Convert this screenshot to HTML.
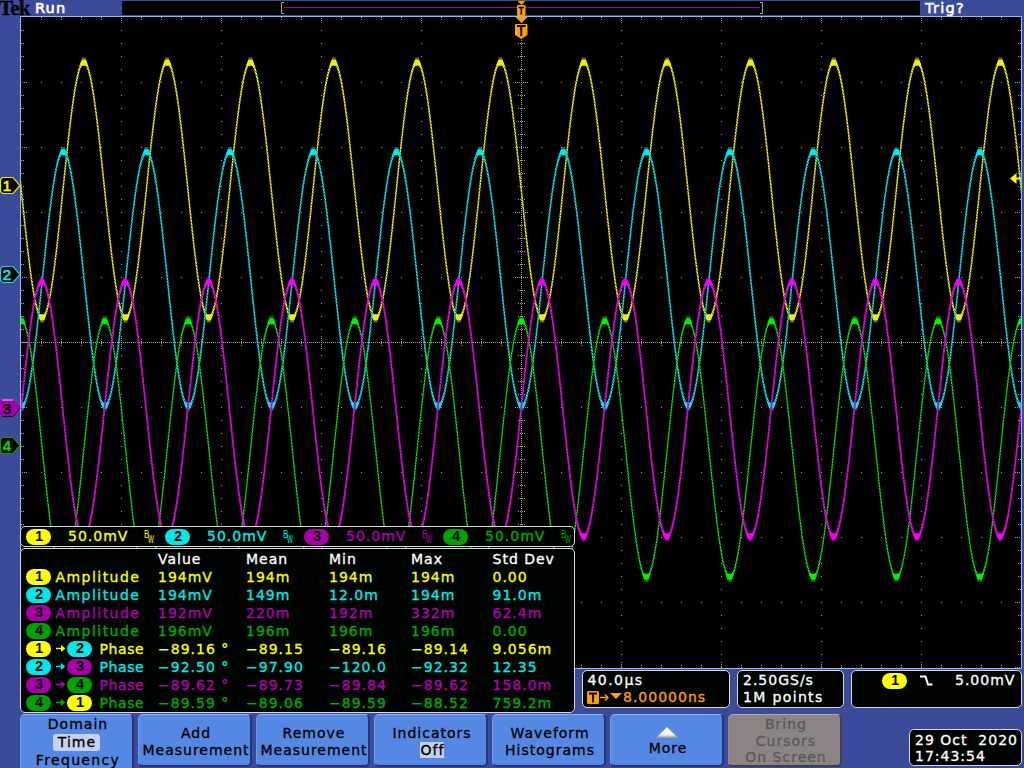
<!DOCTYPE html>
<html><head><meta charset="utf-8"><title>Tek scope</title>
<style>
html,body{margin:0;padding:0}
body{width:1024px;height:768px;overflow:hidden;position:relative;background:#3c4a9a;
 font-family:"DejaVu Sans","Liberation Sans",sans-serif;font-size:14px;letter-spacing:1px;line-height:16px;color:#fff;-webkit-text-stroke:0.3px}
.a{position:absolute;white-space:pre}
svg{position:absolute;left:0;top:0}
.pn{position:absolute;background:#000400;border:1px solid #d8d8d8;border-radius:5px;box-sizing:border-box}
.pl{position:absolute;width:25px;height:16px;border-radius:8px;color:#000;text-align:center;font-family:"Liberation Sans","DejaVu Sans",sans-serif;font-weight:bold;font-size:14.500px;line-height:15px;letter-spacing:0;-webkit-text-stroke:0;text-indent:1px}
.bt{position:absolute;top:714px;width:114px;height:53px;box-sizing:border-box;background:#5588e2;border-radius:5px;
 border-top:1px solid #86b4f6;border-left:1px solid #6c9cec;border-right:2px solid #263478;border-bottom:2px solid #263478;
 color:#000;text-align:center}
.bt span{position:absolute;left:2px;right:-1px;white-space:pre}
.y{color:#ffff00}.c{color:#00ecec}.m{color:#b400b4}.g{color:#00ac00}
.py{background:#ffff00}.pc{background:#00e8e8}.pm{background:#a800a8}.pg{background:#00a000}
.bw{position:absolute;font-size:10px;letter-spacing:0;line-height:8px;-webkit-text-stroke:0;font-family:"Liberation Sans","DejaVu Sans",sans-serif}
</style></head><body>

<svg width="1024" height="768" viewBox="0 0 1024 768" shape-rendering="auto">
<defs><clipPath id="gc"><rect x="21" y="17" width="1000" height="651"/></clipPath></defs>
<rect x="122" y="1" width="798" height="14" fill="#000400"/>
<rect x="284" y="7" width="476" height="1" fill="#a800a8"/>
<path d="M284 2.5H281.5V13.5H284" fill="none" stroke="#a8a8a8" stroke-width="1"/>
<path d="M760 2.5H762.5V13.5H760" fill="none" stroke="#a8a8a8" stroke-width="1"/>
<rect x="20.5" y="16.5" width="1001" height="652" fill="#000" stroke="#8cb8f4" stroke-width="1"/>
<g stroke="#aca07c" stroke-width="1" fill="none" clip-path="url(#gc)"><path d="M121.5 30V668" stroke-dasharray="1 12"/><path d="M121.5 336V349" stroke-dasharray="1 1"/><path d="M221.5 30V668" stroke-dasharray="1 12"/><path d="M221.5 336V349" stroke-dasharray="1 1"/><path d="M321.5 30V668" stroke-dasharray="1 12"/><path d="M321.5 336V349" stroke-dasharray="1 1"/><path d="M421.5 30V668" stroke-dasharray="1 12"/><path d="M421.5 336V349" stroke-dasharray="1 1"/><path d="M521.5 18V668" stroke-dasharray="1 1"/><path d="M621.5 30V668" stroke-dasharray="1 12"/><path d="M621.5 336V349" stroke-dasharray="1 1"/><path d="M721.5 30V668" stroke-dasharray="1 12"/><path d="M721.5 336V349" stroke-dasharray="1 1"/><path d="M821.5 30V668" stroke-dasharray="1 12"/><path d="M821.5 336V349" stroke-dasharray="1 1"/><path d="M921.5 30V668" stroke-dasharray="1 12"/><path d="M921.5 336V349" stroke-dasharray="1 1"/><path d="M41 82.5H1021" stroke-dasharray="1 19"/><path d="M515 82.5H528" stroke-dasharray="1 1"/><path d="M41 147.5H1021" stroke-dasharray="1 19"/><path d="M515 147.5H528" stroke-dasharray="1 1"/><path d="M41 212.5H1021" stroke-dasharray="1 19"/><path d="M515 212.5H528" stroke-dasharray="1 1"/><path d="M41 277.5H1021" stroke-dasharray="1 19"/><path d="M515 277.5H528" stroke-dasharray="1 1"/><path d="M21 342.5H1021" stroke-dasharray="1 1"/><path d="M41 407.5H1021" stroke-dasharray="1 19"/><path d="M515 407.5H528" stroke-dasharray="1 1"/><path d="M41 472.5H1021" stroke-dasharray="1 19"/><path d="M515 472.5H528" stroke-dasharray="1 1"/><path d="M41 537.5H1021" stroke-dasharray="1 19"/><path d="M515 537.5H528" stroke-dasharray="1 1"/><path d="M41 602.5H1021" stroke-dasharray="1 19"/><path d="M515 602.5H528" stroke-dasharray="1 1"/><path d="M41 339.5H1021M41 341.5H1021M41 343.5H1021M41 345.5H1021" stroke-dasharray="1 19 1 19 1 19 1 39"/><path d="M518.5 30V668M520.5 30V668M522.5 30V668M524.5 30V668" stroke-dasharray="1 12 1 12 1 12 1 25"/><path d="M41 17.5H1021M41 19.5H1021M41 667.5H1021M41 665.5H1021" stroke-dasharray="1 19 1 19 1 19 1 39"/><path d="M121 18.5H1021M121 20.5H1021M121 22.5H1021M121 666.5H1021M121 664.5H1021M121 662.5H1021" stroke-dasharray="1 99"/><path d="M21.5 30V668M23.5 30V668M1020.5 30V668M1018.5 30V668" stroke-dasharray="1 12 1 12 1 12 1 25"/><path d="M22.5 82V668M24.5 82V668M26.5 82V668M1019.5 82V668M1017.5 82V668M1015.5 82V668" stroke-dasharray="1 64"/></g>
<g clip-path="url(#gc)">
<defs><pattern id="pw1" patternUnits="userSpaceOnUse" width="16.00" height="6.00"><rect width="16.00" height="6.00" fill="#888800"/><rect x="0.00" y="-3.00" width="3.20" height="2" fill="#f0f000"/><rect x="0.00" y="0.00" width="3.20" height="2" fill="#f0f000"/><rect x="0.00" y="3.00" width="3.20" height="2" fill="#f0f000"/><rect x="3.20" y="-2.00" width="3.20" height="2" fill="#f0f000"/><rect x="3.20" y="1.00" width="3.20" height="2" fill="#f0f000"/><rect x="3.20" y="4.00" width="3.20" height="2" fill="#f0f000"/><rect x="6.40" y="-1.00" width="3.20" height="2" fill="#f0f000"/><rect x="6.40" y="2.00" width="3.20" height="2" fill="#f0f000"/><rect x="6.40" y="5.00" width="3.20" height="2" fill="#f0f000"/><rect x="9.60" y="-3.00" width="3.20" height="2" fill="#f0f000"/><rect x="9.60" y="0.00" width="3.20" height="2" fill="#f0f000"/><rect x="9.60" y="3.00" width="3.20" height="2" fill="#f0f000"/><rect x="12.80" y="-1.00" width="3.20" height="2" fill="#f0f000"/><rect x="12.80" y="2.00" width="3.20" height="2" fill="#f0f000"/><rect x="12.80" y="5.00" width="3.20" height="2" fill="#f0f000"/></pattern></defs><g fill="none" stroke-width="4.80" stroke-linejoin="round" stroke-linecap="round" transform="scale(0.3125 1)"><path d="M57.6 158.5L60.8 167.9L64.0 177.5L67.2 187.1L70.4 196.8L73.6 206.4L76.8 215.9L80.0 225.2L83.2 234.4L86.4 243.3L89.6 251.9L92.8 260.2L96.0 268.1L99.2 275.5L102.4 282.4L105.6 288.8L108.8 294.7L112.0 299.9L115.2 304.6L118.4 308.5L121.6 311.8L124.8 314.4L128.0 316.3L131.2 317.5L134.4 318.0L137.6 317.7L140.8 316.7L144.0 315.0L147.2 312.6L150.4 309.5L153.6 305.7L156.8 301.2L160.0 296.1L163.2 290.4L166.4 284.2L169.6 277.4L172.8 270.1L176.0 262.3L179.2 254.2L182.4 245.7L185.6 236.8L188.8 227.7L192.0 218.4L195.2 208.9L198.4 199.3L201.6 189.7L204.8 180.0L208.0 170.5L211.2 161.0L214.4 151.7L217.6 142.6L220.8 133.8L224.0 125.3L227.2 117.1L230.4 109.4L233.6 102.1L236.8 95.4L240.0 89.2L243.2 83.5L246.4 78.5L249.6 74.0L252.8 70.3L256.0 67.2L259.2 64.8L262.4 63.2L265.6 62.2L268.8 62.0L272.0 62.5L275.2 63.8L278.4 65.7L281.6 68.4L284.8 71.7L288.0 75.7L291.2 80.4L294.4 85.7L297.6 91.6L300.8 98.0L304.0 105.0L307.2 112.4L310.4 120.3L313.6 128.6L316.8 137.3L320.0 146.2L323.2 155.4L326.4 164.8L329.6 174.3L332.8 183.9L336.0 193.5L339.2 203.2L342.4 212.7L345.6 222.1L348.8 231.4L352.0 240.4L355.2 249.1L358.4 257.5L361.6 265.5L364.8 273.1L368.0 280.2L371.2 286.8L374.4 292.8L377.6 298.2L380.8 303.1L384.0 307.3L387.2 310.8L390.4 313.7L393.6 315.8L396.8 317.2L400.0 317.9L403.2 317.9L406.4 317.1L409.6 315.7L412.8 313.5L416.0 310.6L419.2 307.0L422.4 302.8L425.6 297.9L428.8 292.4L432.0 286.3L435.2 279.7L438.4 272.6L441.6 265.0L444.8 256.9L448.0 248.5L451.2 239.8L454.4 230.8L457.6 221.5L460.8 212.1L464.0 202.5L467.2 192.9L470.4 183.2L473.6 173.6L476.8 164.1L480.0 154.8L483.2 145.6L486.4 136.7L489.6 128.1L492.8 119.8L496.0 111.9L499.2 104.5L502.4 97.6L505.6 91.2L508.8 85.3L512.0 80.1L515.2 75.4L518.4 71.5L521.6 68.2L524.8 65.6L528.0 63.7L531.2 62.5L534.4 62.0L537.6 62.3L540.8 63.3L544.0 65.0L547.2 67.4L550.4 70.5L553.6 74.3L556.8 78.8L560.0 83.9L563.2 89.6L566.4 95.8L569.6 102.6L572.8 109.9L576.0 117.7L579.2 125.8L582.4 134.3L585.6 143.2L588.8 152.3L592.0 161.6L595.2 171.1L598.4 180.7L601.6 190.3L604.8 200.0L608.0 209.6L611.2 219.0L614.4 228.3L617.6 237.4L620.8 246.2L624.0 254.7L627.2 262.9L630.4 270.6L633.6 277.9L636.8 284.6L640.0 290.8L643.2 296.5L646.4 301.5L649.6 306.0L652.8 309.7L656.0 312.8L659.2 315.2L662.4 316.8L665.6 317.8L668.8 318.0L672.0 317.5L675.2 316.2L678.4 314.3L681.6 311.6L684.8 308.3L688.0 304.3L691.2 299.6L694.4 294.3L697.6 288.4L700.8 282.0L704.0 275.0L707.2 267.6L710.4 259.7L713.6 251.4L716.8 242.7L720.0 233.8L723.2 224.6L726.4 215.2L729.6 205.7L732.8 196.1L736.0 186.5L739.2 176.8L742.4 167.3L745.6 157.9L748.8 148.6L752.0 139.6L755.2 130.9L758.4 122.5L761.6 114.5L764.8 106.9L768.0 99.8L771.2 93.2L774.4 87.2L777.6 81.8L780.8 76.9L784.0 72.7L787.2 69.2L790.4 66.3L793.6 64.2L796.8 62.8L800.0 62.1L803.2 62.1L806.4 62.9L809.6 64.3L812.8 66.5L816.0 69.4L819.2 73.0L822.4 77.2L825.6 82.1L828.8 87.6L832.0 93.7L835.2 100.3L838.4 107.4L841.6 115.0L844.8 123.1L848.0 131.5L851.2 140.2L854.4 149.2L857.6 158.5L860.8 167.9L864.0 177.5L867.2 187.1L870.4 196.8L873.6 206.4L876.8 215.9L880.0 225.3L883.2 234.4L886.4 243.3L889.6 252.0L892.8 260.2L896.0 268.1L899.2 275.5L902.4 282.4L905.6 288.8L908.8 294.7L912.0 299.9L915.2 304.6L918.4 308.5L921.6 311.8L924.8 314.4L928.0 316.3L931.2 317.5L934.4 318.0L937.6 317.7L940.8 316.7L944.0 315.0L947.2 312.6L950.4 309.5L953.6 305.7L956.8 301.2L960.0 296.1L963.2 290.4L966.4 284.2L969.6 277.4L972.8 270.1L976.0 262.3L979.2 254.2L982.4 245.7L985.6 236.8L988.8 227.7L992.0 218.4L995.2 208.9L998.4 199.3L1001.6 189.7L1004.8 180.0L1008.0 170.4L1011.2 161.0L1014.4 151.7L1017.6 142.6L1020.8 133.8L1024.0 125.3L1027.2 117.1L1030.4 109.4L1033.6 102.1L1036.8 95.4L1040.0 89.2L1043.2 83.5L1046.4 78.5L1049.6 74.0L1052.8 70.3L1056.0 67.2L1059.2 64.8L1062.4 63.2L1065.6 62.2L1068.8 62.0L1072.0 62.5L1075.2 63.8L1078.4 65.7L1081.6 68.4L1084.8 71.7L1088.0 75.7L1091.2 80.4L1094.4 85.7L1097.6 91.6L1100.8 98.0L1104.0 105.0L1107.2 112.4L1110.4 120.3L1113.6 128.6L1116.8 137.3L1120.0 146.2L1123.2 155.4L1126.4 164.8L1129.6 174.3L1132.8 183.9L1136.0 193.5L1139.2 203.2L1142.4 212.7L1145.6 222.2L1148.8 231.4L1152.0 240.4L1155.2 249.1L1158.4 257.5L1161.6 265.5L1164.8 273.1L1168.0 280.2L1171.2 286.8L1174.4 292.8L1177.6 298.3L1180.8 303.1L1184.0 307.3L1187.2 310.8L1190.4 313.7L1193.6 315.8L1196.8 317.2L1200.0 317.9L1203.2 317.9L1206.4 317.1L1209.6 315.7L1212.8 313.5L1216.0 310.6L1219.2 307.0L1222.4 302.8L1225.6 297.9L1228.8 292.4L1232.0 286.3L1235.2 279.7L1238.4 272.6L1241.6 265.0L1244.8 256.9L1248.0 248.5L1251.2 239.8L1254.4 230.8L1257.6 221.5L1260.8 212.1L1264.0 202.5L1267.2 192.9L1270.4 183.2L1273.6 173.6L1276.8 164.1L1280.0 154.7L1283.2 145.6L1286.4 136.7L1289.6 128.0L1292.8 119.8L1296.0 111.9L1299.2 104.5L1302.4 97.6L1305.6 91.2L1308.8 85.3L1312.0 80.1L1315.2 75.4L1318.4 71.5L1321.6 68.2L1324.8 65.6L1328.0 63.7L1331.2 62.5L1334.4 62.0L1337.6 62.3L1340.8 63.3L1344.0 65.0L1347.2 67.4L1350.4 70.5L1353.6 74.3L1356.8 78.8L1360.0 83.9L1363.2 89.6L1366.4 95.8L1369.6 102.6L1372.8 109.9L1376.0 117.7L1379.2 125.8L1382.4 134.4L1385.6 143.2L1388.8 152.3L1392.0 161.6L1395.2 171.1L1398.4 180.7L1401.6 190.3L1404.8 200.0L1408.0 209.6L1411.2 219.0L1414.4 228.3L1417.6 237.4L1420.8 246.3L1424.0 254.8L1427.2 262.9L1430.4 270.6L1433.6 277.9L1436.8 284.6L1440.0 290.9L1443.2 296.5L1446.4 301.5L1449.6 306.0L1452.8 309.7L1456.0 312.8L1459.2 315.2L1462.4 316.8L1465.6 317.8L1468.8 318.0L1472.0 317.5L1475.2 316.2L1478.4 314.3L1481.6 311.6L1484.8 308.3L1488.0 304.3L1491.2 299.6L1494.4 294.3L1497.6 288.4L1500.8 282.0L1504.0 275.0L1507.2 267.5L1510.4 259.7L1513.6 251.4L1516.8 242.7L1520.0 233.8L1523.2 224.6L1526.4 215.2L1529.6 205.7L1532.8 196.1L1536.0 186.4L1539.2 176.8L1542.4 167.3L1545.6 157.8L1548.8 148.6L1552.0 139.6L1555.2 130.9L1558.4 122.5L1561.6 114.5L1564.8 106.9L1568.0 99.8L1571.2 93.2L1574.4 87.2L1577.6 81.7L1580.8 76.9L1584.0 72.7L1587.2 69.2L1590.4 66.3L1593.6 64.2L1596.8 62.8L1600.0 62.1L1603.2 62.1L1606.4 62.9L1609.6 64.3L1612.8 66.5L1616.0 69.4L1619.2 73.0L1622.4 77.2L1625.6 82.1L1628.8 87.6L1632.0 93.7L1635.2 100.3L1638.4 107.4L1641.6 115.0L1644.8 123.1L1648.0 131.5L1651.2 140.2L1654.4 149.2L1657.6 158.5L1660.8 167.9L1664.0 177.5L1667.2 187.1L1670.4 196.8L1673.6 206.4L1676.8 215.9L1680.0 225.3L1683.2 234.4L1686.4 243.3L1689.6 252.0L1692.8 260.2L1696.0 268.1L1699.2 275.5L1702.4 282.4L1705.6 288.8L1708.8 294.7L1712.0 299.9L1715.2 304.6L1718.4 308.5L1721.6 311.8L1724.8 314.4L1728.0 316.4L1731.2 317.5L1734.4 318.0L1737.6 317.7L1740.8 316.7L1744.0 315.0L1747.2 312.6L1750.4 309.5L1753.6 305.7L1756.8 301.2L1760.0 296.1L1763.2 290.4L1766.4 284.2L1769.6 277.4L1772.8 270.1L1776.0 262.3L1779.2 254.2L1782.4 245.6L1785.6 236.8L1788.8 227.7L1792.0 218.4L1795.2 208.9L1798.4 199.3L1801.6 189.7L1804.8 180.0L1808.0 170.4L1811.2 161.0L1814.4 151.7L1817.6 142.6L1820.8 133.7L1824.0 125.2L1827.2 117.1L1830.4 109.4L1833.6 102.1L1836.8 95.4L1840.0 89.1L1843.2 83.5L1846.4 78.4L1849.6 74.0L1852.8 70.3L1856.0 67.2L1859.2 64.8L1862.4 63.2L1865.6 62.2L1868.8 62.0L1872.0 62.5L1875.2 63.8L1878.4 65.7L1881.6 68.4L1884.8 71.7L1888.0 75.7L1891.2 80.4L1894.4 85.7L1897.6 91.6L1900.8 98.0L1904.0 105.0L1907.2 112.5L1910.4 120.3L1913.6 128.6L1916.8 137.3L1920.0 146.2L1923.2 155.4L1926.4 164.8L1929.6 174.3L1932.8 183.9L1936.0 193.6L1939.2 203.2L1942.4 212.7L1945.6 222.2L1948.8 231.4L1952.0 240.4L1955.2 249.1L1958.4 257.5L1961.6 265.5L1964.8 273.1L1968.0 280.2L1971.2 286.8L1974.4 292.8L1977.6 298.3L1980.8 303.1L1984.0 307.3L1987.2 310.8L1990.4 313.7L1993.6 315.8L1996.8 317.2L2000.0 317.9L2003.2 317.9L2006.4 317.1L2009.6 315.7L2012.8 313.5L2016.0 310.6L2019.2 307.0L2022.4 302.8L2025.6 297.9L2028.8 292.4L2032.0 286.3L2035.2 279.7L2038.4 272.6L2041.6 265.0L2044.8 256.9L2048.0 248.5L2051.2 239.8L2054.4 230.8L2057.6 221.5L2060.8 212.1L2064.0 202.5L2067.2 192.9L2070.4 183.2L2073.6 173.6L2076.8 164.1L2080.0 154.7L2083.2 145.6L2086.4 136.6L2089.6 128.0L2092.8 119.8L2096.0 111.9L2099.2 104.5L2102.4 97.6L2105.6 91.2L2108.8 85.3L2112.0 80.1L2115.2 75.4L2118.4 71.5L2121.6 68.2L2124.8 65.6L2128.0 63.6L2131.2 62.5L2134.4 62.0L2137.6 62.3L2140.8 63.3L2144.0 65.0L2147.2 67.4L2150.4 70.5L2153.6 74.3L2156.8 78.8L2160.0 83.9L2163.2 89.6L2166.4 95.8L2169.6 102.6L2172.8 109.9L2176.0 117.7L2179.2 125.8L2182.4 134.4L2185.6 143.2L2188.8 152.3L2192.0 161.6L2195.2 171.1L2198.4 180.7L2201.6 190.3L2204.8 200.0L2208.0 209.6L2211.2 219.0L2214.4 228.4L2217.6 237.4L2220.8 246.3L2224.0 254.8L2227.2 262.9L2230.4 270.6L2233.6 277.9L2236.8 284.6L2240.0 290.9L2243.2 296.5L2246.4 301.6L2249.6 306.0L2252.8 309.7L2256.0 312.8L2259.2 315.2L2262.4 316.8L2265.6 317.8L2268.8 318.0L2272.0 317.5L2275.2 316.2L2278.4 314.3L2281.6 311.6L2284.8 308.3L2288.0 304.3L2291.2 299.6L2294.4 294.3L2297.6 288.4L2300.8 282.0L2304.0 275.0L2307.2 267.5L2310.4 259.6L2313.6 251.4L2316.8 242.7L2320.0 233.8L2323.2 224.6L2326.4 215.2L2329.6 205.7L2332.8 196.1L2336.0 186.4L2339.2 176.8L2342.4 167.3L2345.6 157.8L2348.8 148.6L2352.0 139.6L2355.2 130.9L2358.4 122.5L2361.6 114.5L2364.8 106.9L2368.0 99.8L2371.2 93.2L2374.4 87.2L2377.6 81.7L2380.8 76.9L2384.0 72.7L2387.2 69.2L2390.4 66.3L2393.6 64.2L2396.8 62.8L2400.0 62.1L2403.2 62.1L2406.4 62.9L2409.6 64.3L2412.8 66.5L2416.0 69.4L2419.2 73.0L2422.4 77.2L2425.6 82.1L2428.8 87.6L2432.0 93.7L2435.2 100.3L2438.4 107.4L2441.6 115.0L2444.8 123.1L2448.0 131.5L2451.2 140.2L2454.4 149.2L2457.6 158.5L2460.8 167.9L2464.0 177.5L2467.2 187.1L2470.4 196.8L2473.6 206.4L2476.8 215.9L2480.0 225.3L2483.2 234.4L2486.4 243.4L2489.6 252.0L2492.8 260.2L2496.0 268.1L2499.2 275.5L2502.4 282.4L2505.6 288.8L2508.8 294.7L2512.0 299.9L2515.2 304.6L2518.4 308.5L2521.6 311.8L2524.8 314.5L2528.0 316.4L2531.2 317.5L2534.4 318.0L2537.6 317.7L2540.8 316.7L2544.0 315.0L2547.2 312.6L2550.4 309.5L2553.6 305.7L2556.8 301.2L2560.0 296.1L2563.2 290.4L2566.4 284.2L2569.6 277.4L2572.8 270.1L2576.0 262.3L2579.2 254.2L2582.4 245.6L2585.6 236.8L2588.8 227.7L2592.0 218.4L2595.2 208.9L2598.4 199.3L2601.6 189.7L2604.8 180.0L2608.0 170.4L2611.2 161.0L2614.4 151.6L2617.6 142.6L2620.8 133.7L2624.0 125.2L2627.2 117.1L2630.4 109.4L2633.6 102.1L2636.8 95.4L2640.0 89.1L2643.2 83.5L2646.4 78.4L2649.6 74.0L2652.8 70.3L2656.0 67.2L2659.2 64.8L2662.4 63.2L2665.6 62.2L2668.8 62.0L2672.0 62.5L2675.2 63.8L2678.4 65.7L2681.6 68.4L2684.8 71.7L2688.0 75.7L2691.2 80.4L2694.4 85.7L2697.6 91.6L2700.8 98.0L2704.0 105.0L2707.2 112.5L2710.4 120.4L2713.6 128.6L2716.8 137.3L2720.0 146.2L2723.2 155.4L2726.4 164.8L2729.6 174.3L2732.8 183.9L2736.0 193.6L2739.2 203.2L2742.4 212.7L2745.6 222.2L2748.8 231.4L2752.0 240.4L2755.2 249.1L2758.4 257.5L2761.6 265.5L2764.8 273.1L2768.0 280.2L2771.2 286.8L2774.4 292.8L2777.6 298.3L2780.8 303.1L2784.0 307.3L2787.2 310.8L2790.4 313.7L2793.6 315.8L2796.8 317.2L2800.0 317.9L2803.2 317.9L2806.4 317.1L2809.6 315.7L2812.8 313.5L2816.0 310.6L2819.2 307.0L2822.4 302.8L2825.6 297.9L2828.8 292.4L2832.0 286.3L2835.2 279.7L2838.4 272.6L2841.6 265.0L2844.8 256.9L2848.0 248.5L2851.2 239.8L2854.4 230.7L2857.6 221.5L2860.8 212.1L2864.0 202.5L2867.2 192.9L2870.4 183.2L2873.6 173.6L2876.8 164.1L2880.0 154.7L2883.2 145.6L2886.4 136.6L2889.6 128.0L2892.8 119.8L2896.0 111.9L2899.2 104.5L2902.4 97.6L2905.6 91.1L2908.8 85.3L2912.0 80.1L2915.2 75.4L2918.4 71.5L2921.6 68.2L2924.8 65.5L2928.0 63.6L2931.2 62.5L2934.4 62.0L2937.6 62.3L2940.8 63.3L2944.0 65.0L2947.2 67.4L2950.4 70.5L2953.6 74.3L2956.8 78.8L2960.0 83.9L2963.2 89.6L2966.4 95.8L2969.6 102.6L2972.8 109.9L2976.0 117.7L2979.2 125.8L2982.4 134.4L2985.6 143.2L2988.8 152.3L2992.0 161.6L2995.2 171.1L2998.4 180.7L3001.6 190.4L3004.8 200.0L3008.0 209.6L3011.2 219.1L3014.4 228.4L3017.6 237.4L3020.8 246.3L3024.0 254.8L3027.2 262.9L3030.4 270.6L3033.6 277.9L3036.8 284.6L3040.0 290.9L3043.2 296.5L3046.4 301.6L3049.6 306.0L3052.8 309.7L3056.0 312.8L3059.2 315.2L3062.4 316.8L3065.6 317.8L3068.8 318.0L3072.0 317.5L3075.2 316.2L3078.4 314.3L3081.6 311.6L3084.8 308.3L3088.0 304.3L3091.2 299.6L3094.4 294.3L3097.6 288.4L3100.8 282.0L3104.0 275.0L3107.2 267.5L3110.4 259.6L3113.6 251.4L3116.8 242.7L3120.0 233.8L3123.2 224.6L3126.4 215.2L3129.6 205.7L3132.8 196.1L3136.0 186.4L3139.2 176.8L3142.4 167.2L3145.6 157.8L3148.8 148.6L3152.0 139.6L3155.2 130.9L3158.4 122.5L3161.6 114.5L3164.8 106.9L3168.0 99.8L3171.2 93.2L3174.4 87.2L3177.6 81.7L3180.8 76.9L3184.0 72.7L3187.2 69.2L3190.4 66.3L3193.6 64.2L3196.8 62.8L3200.0 62.1L3203.2 62.1L3206.4 62.9L3209.6 64.3L3212.8 66.5L3216.0 69.4L3219.2 73.0L3222.4 77.2L3225.6 82.1L3228.8 87.6L3232.0 93.7L3235.2 100.3L3238.4 107.4L3241.6 115.1L3244.8 123.1L3248.0 131.5L3251.2 140.2L3254.4 149.3L3257.6 158.5L3260.8 167.9L3264.0 177.5L3267.2 187.1L3270.4 196.8L3273.6 206.4L3276.8 215.9" stroke="url(#pw1)"/></g><path d="M39.9 320.2h4.400l1.200-3.500l0.600-2.500h-8l0.600 2.500zM81.6 59.8h4.400l1.200 3.500l0.600 2.500h-8l0.600-2.500zM123.3 320.2h4.400l1.200-3.500l0.600-2.500h-8l0.600 2.500zM164.9 59.8h4.400l1.200 3.500l0.600 2.500h-8l0.600-2.500zM206.6 320.2h4.400l1.200-3.500l0.600-2.500h-8l0.600 2.500zM248.3 59.8h4.400l1.200 3.500l0.600 2.500h-8l0.600-2.500zM289.9 320.2h4.400l1.200-3.500l0.600-2.500h-8l0.600 2.500zM331.6 59.8h4.400l1.200 3.500l0.600 2.500h-8l0.600-2.500zM373.3 320.2h4.400l1.200-3.500l0.600-2.500h-8l0.600 2.500zM414.9 59.8h4.400l1.200 3.500l0.600 2.500h-8l0.600-2.500zM456.6 320.2h4.400l1.200-3.500l0.600-2.500h-8l0.600 2.500zM498.3 59.8h4.400l1.200 3.500l0.600 2.500h-8l0.600-2.500zM539.9 320.2h4.400l1.200-3.500l0.600-2.500h-8l0.600 2.500zM581.6 59.8h4.400l1.200 3.500l0.600 2.500h-8l0.600-2.500zM623.3 320.2h4.400l1.200-3.500l0.600-2.500h-8l0.600 2.500zM664.9 59.8h4.400l1.200 3.500l0.600 2.500h-8l0.600-2.500zM706.6 320.2h4.400l1.200-3.500l0.600-2.500h-8l0.600 2.500zM748.3 59.8h4.400l1.200 3.500l0.600 2.500h-8l0.600-2.500zM789.9 320.2h4.400l1.200-3.500l0.600-2.500h-8l0.600 2.500zM831.6 59.8h4.400l1.200 3.500l0.600 2.500h-8l0.600-2.500zM873.3 320.2h4.400l1.200-3.500l0.600-2.500h-8l0.600 2.500zM914.9 59.8h4.400l1.200 3.500l0.600 2.500h-8l0.600-2.500zM956.6 320.2h4.400l1.200-3.500l0.600-2.500h-8l0.600 2.500zM998.3 59.8h4.400l1.200 3.500l0.600 2.500h-8l0.600-2.500z" fill="#f0f000"/><path d="M42.1 320.0v2.500M83.8 60.0v-2.500M125.5 320.0v2.500M167.1 60.0v-2.500M208.8 320.0v2.500M250.5 60.0v-2.500M292.1 320.0v2.500M333.8 60.0v-2.500M375.5 320.0v2.500M417.1 60.0v-2.500M458.8 320.0v2.500M500.5 60.0v-2.500M542.1 320.0v2.500M583.8 60.0v-2.500M625.5 320.0v2.500M667.1 60.0v-2.500M708.8 320.0v2.500M750.5 60.0v-2.500M792.1 320.0v2.500M833.8 60.0v-2.500M875.5 320.0v2.500M917.1 60.0v-2.500M958.8 320.0v2.500M1000.5 60.0v-2.500" stroke="#f0f000" stroke-width="4" fill="none" opacity="0.45"/>
<defs><pattern id="pw2" patternUnits="userSpaceOnUse" width="16.00" height="6.00"><rect width="16.00" height="6.00" fill="#008088"/><rect x="0.00" y="-3.00" width="3.20" height="2" fill="#00e8f0"/><rect x="0.00" y="0.00" width="3.20" height="2" fill="#00e8f0"/><rect x="0.00" y="3.00" width="3.20" height="2" fill="#00e8f0"/><rect x="3.20" y="-2.00" width="3.20" height="2" fill="#00e8f0"/><rect x="3.20" y="1.00" width="3.20" height="2" fill="#00e8f0"/><rect x="3.20" y="4.00" width="3.20" height="2" fill="#00e8f0"/><rect x="6.40" y="-1.00" width="3.20" height="2" fill="#00e8f0"/><rect x="6.40" y="2.00" width="3.20" height="2" fill="#00e8f0"/><rect x="6.40" y="5.00" width="3.20" height="2" fill="#00e8f0"/><rect x="9.60" y="-3.00" width="3.20" height="2" fill="#00e8f0"/><rect x="9.60" y="0.00" width="3.20" height="2" fill="#00e8f0"/><rect x="9.60" y="3.00" width="3.20" height="2" fill="#00e8f0"/><rect x="12.80" y="-1.00" width="3.20" height="2" fill="#00e8f0"/><rect x="12.80" y="2.00" width="3.20" height="2" fill="#00e8f0"/><rect x="12.80" y="5.00" width="3.20" height="2" fill="#00e8f0"/></pattern></defs><g fill="none" stroke-width="4.96" stroke-linejoin="round" stroke-linecap="round" transform="scale(0.3125 1)"><path d="M57.6 401.7L60.8 403.9L64.0 405.3L67.2 406.1L70.4 406.1L73.6 405.4L76.8 404.0L80.0 401.9L83.2 399.0L86.4 395.5L89.6 391.4L92.8 386.5L96.0 381.1L99.2 375.1L102.4 368.5L105.6 361.5L108.8 353.9L112.0 346.0L115.2 337.6L118.4 329.0L121.6 320.0L124.8 310.8L128.0 301.4L131.2 291.9L134.4 282.3L137.6 272.7L140.8 263.2L144.0 253.7L147.2 244.3L150.4 235.2L153.6 226.3L156.8 217.7L160.0 209.5L163.2 201.6L166.4 194.2L169.6 187.3L172.8 180.8L176.0 175.0L179.2 169.7L182.4 165.1L185.6 161.1L188.8 157.7L192.0 155.1L195.2 153.1L198.4 151.9L201.6 151.4L204.8 151.6L208.0 152.6L211.2 154.2L214.4 156.6L217.6 159.7L220.8 163.4L224.0 167.8L227.2 172.8L230.4 178.4L233.6 184.6L236.8 191.4L240.0 198.6L243.2 206.3L246.4 214.4L249.6 222.8L252.8 231.6L256.0 240.7L259.2 249.9L262.4 259.3L265.6 268.9L268.8 278.5L272.0 288.1L275.2 297.6L278.4 307.1L281.6 316.3L284.8 325.4L288.0 334.2L291.2 342.7L294.4 350.8L297.6 358.5L300.8 365.8L304.0 372.5L307.2 378.8L310.4 384.4L313.6 389.5L316.8 393.9L320.0 397.7L323.2 400.8L326.4 403.2L329.6 404.9L332.8 405.9L336.0 406.2L339.2 405.7L342.4 404.6L345.6 402.7L348.8 400.1L352.0 396.8L355.2 392.8L358.4 388.2L361.6 383.0L364.8 377.2L368.0 370.8L371.2 363.9L374.4 356.5L377.6 348.7L380.8 340.5L384.0 331.9L387.2 323.0L390.4 313.9L393.6 304.6L396.8 295.1L400.0 285.5L403.2 275.9L406.4 266.3L409.6 256.8L412.8 247.4L416.0 238.2L419.2 229.2L422.4 220.5L425.6 212.2L428.8 204.2L432.0 196.6L435.2 189.5L438.4 182.9L441.6 176.9L444.8 171.4L448.0 166.5L451.2 162.3L454.4 158.8L457.6 155.9L460.8 153.7L464.0 152.3L467.2 151.5L470.4 151.5L473.6 152.2L476.8 153.6L480.0 155.7L483.2 158.6L486.4 162.1L489.6 166.2L492.8 171.1L496.0 176.5L499.2 182.5L502.4 189.1L505.6 196.1L508.8 203.7L512.0 211.6L515.2 220.0L518.4 228.6L521.6 237.6L524.8 246.8L528.0 256.2L531.2 265.7L534.4 275.3L537.6 284.9L540.8 294.5L544.0 303.9L547.2 313.3L550.4 322.4L553.6 331.3L556.8 339.9L560.0 348.1L563.2 356.0L566.4 363.4L569.6 370.3L572.8 376.8L576.0 382.6L579.2 387.9L582.4 392.5L585.6 396.5L588.8 399.9L592.0 402.5L595.2 404.5L598.4 405.7L601.6 406.2L604.8 406.0L608.0 405.0L611.2 403.4L614.4 401.0L617.6 397.9L620.8 394.2L624.0 389.8L627.2 384.8L630.4 379.2L633.6 373.0L636.8 366.2L640.0 359.0L643.2 351.3L646.4 343.2L649.6 334.8L652.8 326.0L656.0 316.9L659.2 307.7L662.4 298.2L665.6 288.7L668.8 279.1L672.0 269.5L675.2 260.0L678.4 250.5L681.6 241.3L684.8 232.2L688.0 223.4L691.2 214.9L694.4 206.8L697.6 199.1L700.8 191.8L704.0 185.1L707.2 178.8L710.4 173.2L713.6 168.1L716.8 163.7L720.0 159.9L723.2 156.8L726.4 154.4L729.6 152.7L732.8 151.7L736.0 151.4L739.2 151.9L742.4 153.0L745.6 154.9L748.8 157.5L752.0 160.8L755.2 164.8L758.4 169.4L761.6 174.6L764.8 180.4L768.0 186.8L771.2 193.7L774.4 201.1L777.6 208.9L780.8 217.2L784.0 225.7L787.2 234.6L790.4 243.7L793.6 253.1L796.8 262.5L800.0 272.1L803.2 281.7L806.4 291.3L809.6 300.8L812.8 310.2L816.0 319.4L819.2 328.4L822.4 337.1L825.6 345.4L828.8 353.4L832.0 361.0L835.2 368.1L838.4 374.7L841.6 380.7L844.8 386.2L848.0 391.1L851.2 395.3L854.4 398.8L857.6 401.7L860.8 403.9L864.0 405.4L867.2 406.1L870.4 406.1L873.6 405.4L876.8 404.0L880.0 401.9L883.2 399.0L886.4 395.5L889.6 391.4L892.8 386.5L896.0 381.1L899.2 375.1L902.4 368.5L905.6 361.5L908.8 353.9L912.0 346.0L915.2 337.6L918.4 328.9L921.6 320.0L924.8 310.8L928.0 301.4L931.2 291.9L934.4 282.3L937.6 272.7L940.8 263.1L944.0 253.7L947.2 244.3L950.4 235.2L953.6 226.3L956.8 217.7L960.0 209.5L963.2 201.6L966.4 194.2L969.6 187.2L972.8 180.8L976.0 175.0L979.2 169.7L982.4 165.1L985.6 161.1L988.8 157.7L992.0 155.1L995.2 153.1L998.4 151.9L1001.6 151.4L1004.8 151.6L1008.0 152.6L1011.2 154.2L1014.4 156.6L1017.6 159.7L1020.8 163.4L1024.0 167.8L1027.2 172.8L1030.4 178.4L1033.6 184.6L1036.8 191.4L1040.0 198.6L1043.2 206.3L1046.4 214.4L1049.6 222.8L1052.8 231.6L1056.0 240.7L1059.2 249.9L1062.4 259.4L1065.6 268.9L1068.8 278.5L1072.0 288.1L1075.2 297.6L1078.4 307.1L1081.6 316.3L1084.8 325.4L1088.0 334.2L1091.2 342.7L1094.4 350.8L1097.6 358.5L1100.8 365.8L1104.0 372.5L1107.2 378.8L1110.4 384.4L1113.6 389.5L1116.8 393.9L1120.0 397.7L1123.2 400.8L1126.4 403.2L1129.6 404.9L1132.8 405.9L1136.0 406.2L1139.2 405.7L1142.4 404.6L1145.6 402.7L1148.8 400.1L1152.0 396.8L1155.2 392.8L1158.4 388.2L1161.6 383.0L1164.8 377.2L1168.0 370.8L1171.2 363.9L1174.4 356.5L1177.6 348.7L1180.8 340.4L1184.0 331.9L1187.2 323.0L1190.4 313.9L1193.6 304.5L1196.8 295.1L1200.0 285.5L1203.2 275.9L1206.4 266.3L1209.6 256.8L1212.8 247.4L1216.0 238.2L1219.2 229.2L1222.4 220.5L1225.6 212.2L1228.8 204.2L1232.0 196.6L1235.2 189.5L1238.4 182.9L1241.6 176.9L1244.8 171.4L1248.0 166.5L1251.2 162.3L1254.4 158.8L1257.6 155.9L1260.8 153.7L1264.0 152.2L1267.2 151.5L1270.4 151.5L1273.6 152.2L1276.8 153.6L1280.0 155.7L1283.2 158.6L1286.4 162.1L1289.6 166.3L1292.8 171.1L1296.0 176.5L1299.2 182.5L1302.4 189.1L1305.6 196.1L1308.8 203.7L1312.0 211.6L1315.2 220.0L1318.4 228.7L1321.6 237.6L1324.8 246.8L1328.0 256.2L1331.2 265.7L1334.4 275.3L1337.6 284.9L1340.8 294.5L1344.0 303.9L1347.2 313.3L1350.4 322.4L1353.6 331.3L1356.8 339.9L1360.0 348.2L1363.2 356.0L1366.4 363.4L1369.6 370.4L1372.8 376.8L1376.0 382.6L1379.2 387.9L1382.4 392.5L1385.6 396.5L1388.8 399.9L1392.0 402.5L1395.2 404.5L1398.4 405.7L1401.6 406.2L1404.8 406.0L1408.0 405.0L1411.2 403.4L1414.4 401.0L1417.6 397.9L1420.8 394.2L1424.0 389.8L1427.2 384.8L1430.4 379.2L1433.6 373.0L1436.8 366.2L1440.0 359.0L1443.2 351.3L1446.4 343.2L1449.6 334.8L1452.8 326.0L1456.0 316.9L1459.2 307.7L1462.4 298.2L1465.6 288.7L1468.8 279.1L1472.0 269.5L1475.2 260.0L1478.4 250.5L1481.6 241.2L1484.8 232.2L1488.0 223.4L1491.2 214.9L1494.4 206.8L1497.6 199.1L1500.8 191.8L1504.0 185.0L1507.2 178.8L1510.4 173.2L1513.6 168.1L1516.8 163.7L1520.0 159.9L1523.2 156.8L1526.4 154.4L1529.6 152.7L1532.8 151.7L1536.0 151.4L1539.2 151.9L1542.4 153.0L1545.6 154.9L1548.8 157.5L1552.0 160.8L1555.2 164.8L1558.4 169.4L1561.6 174.6L1564.8 180.4L1568.0 186.8L1571.2 193.7L1574.4 201.1L1577.6 208.9L1580.8 217.2L1584.0 225.7L1587.2 234.6L1590.4 243.7L1593.6 253.1L1596.8 262.5L1600.0 272.1L1603.2 281.7L1606.4 291.3L1609.6 300.8L1612.8 310.2L1616.0 319.4L1619.2 328.4L1622.4 337.1L1625.6 345.4L1628.8 353.4L1632.0 361.0L1635.2 368.1L1638.4 374.7L1641.6 380.7L1644.8 386.2L1648.0 391.1L1651.2 395.3L1654.4 398.8L1657.6 401.7L1660.8 403.9L1664.0 405.4L1667.2 406.1L1670.4 406.1L1673.6 405.4L1676.8 404.0L1680.0 401.9L1683.2 399.0L1686.4 395.5L1689.6 391.3L1692.8 386.5L1696.0 381.1L1699.2 375.1L1702.4 368.5L1705.6 361.5L1708.8 353.9L1712.0 346.0L1715.2 337.6L1718.4 328.9L1721.6 320.0L1724.8 310.8L1728.0 301.4L1731.2 291.9L1734.4 282.3L1737.6 272.7L1740.8 263.1L1744.0 253.7L1747.2 244.3L1750.4 235.2L1753.6 226.3L1756.8 217.7L1760.0 209.4L1763.2 201.6L1766.4 194.2L1769.6 187.2L1772.8 180.8L1776.0 175.0L1779.2 169.7L1782.4 165.1L1785.6 161.1L1788.8 157.7L1792.0 155.1L1795.2 153.1L1798.4 151.9L1801.6 151.4L1804.8 151.6L1808.0 152.6L1811.2 154.2L1814.4 156.6L1817.6 159.7L1820.8 163.4L1824.0 167.8L1827.2 172.8L1830.4 178.4L1833.6 184.6L1836.8 191.4L1840.0 198.6L1843.2 206.3L1846.4 214.4L1849.6 222.8L1852.8 231.6L1856.0 240.7L1859.2 249.9L1862.4 259.4L1865.6 268.9L1868.8 278.5L1872.0 288.1L1875.2 297.6L1878.4 307.1L1881.6 316.4L1884.8 325.4L1888.0 334.2L1891.2 342.7L1894.4 350.8L1897.6 358.5L1900.8 365.8L1904.0 372.6L1907.2 378.8L1910.4 384.5L1913.6 389.5L1916.8 393.9L1920.0 397.7L1923.2 400.8L1926.4 403.2L1929.6 404.9L1932.8 405.9L1936.0 406.2L1939.2 405.7L1942.4 404.6L1945.6 402.7L1948.8 400.1L1952.0 396.8L1955.2 392.8L1958.4 388.2L1961.6 383.0L1964.8 377.2L1968.0 370.8L1971.2 363.9L1974.4 356.5L1977.6 348.7L1980.8 340.4L1984.0 331.9L1987.2 323.0L1990.4 313.9L1993.6 304.5L1996.8 295.1L2000.0 285.5L2003.2 275.9L2006.4 266.3L2009.6 256.8L2012.8 247.4L2016.0 238.2L2019.2 229.2L2022.4 220.5L2025.6 212.1L2028.8 204.2L2032.0 196.6L2035.2 189.5L2038.4 182.9L2041.6 176.9L2044.8 171.4L2048.0 166.5L2051.2 162.3L2054.4 158.8L2057.6 155.9L2060.8 153.7L2064.0 152.2L2067.2 151.5L2070.4 151.5L2073.6 152.2L2076.8 153.6L2080.0 155.7L2083.2 158.6L2086.4 162.1L2089.6 166.3L2092.8 171.1L2096.0 176.5L2099.2 182.5L2102.4 189.1L2105.6 196.1L2108.8 203.7L2112.0 211.6L2115.2 220.0L2118.4 228.7L2121.6 237.6L2124.8 246.8L2128.0 256.2L2131.2 265.7L2134.4 275.3L2137.6 284.9L2140.8 294.5L2144.0 304.0L2147.2 313.3L2150.4 322.4L2153.6 331.3L2156.8 339.9L2160.0 348.2L2163.2 356.0L2166.4 363.4L2169.6 370.4L2172.8 376.8L2176.0 382.6L2179.2 387.9L2182.4 392.5L2185.6 396.5L2188.8 399.9L2192.0 402.5L2195.2 404.5L2198.4 405.7L2201.6 406.2L2204.8 406.0L2208.0 405.0L2211.2 403.4L2214.4 401.0L2217.6 397.9L2220.8 394.2L2224.0 389.8L2227.2 384.8L2230.4 379.2L2233.6 373.0L2236.8 366.2L2240.0 359.0L2243.2 351.3L2246.4 343.2L2249.6 334.8L2252.8 326.0L2256.0 316.9L2259.2 307.7L2262.4 298.2L2265.6 288.7L2268.8 279.1L2272.0 269.5L2275.2 260.0L2278.4 250.5L2281.6 241.2L2284.8 232.2L2288.0 223.4L2291.2 214.9L2294.4 206.8L2297.6 199.1L2300.8 191.8L2304.0 185.0L2307.2 178.8L2310.4 173.1L2313.6 168.1L2316.8 163.7L2320.0 159.9L2323.2 156.8L2326.4 154.4L2329.6 152.7L2332.8 151.7L2336.0 151.4L2339.2 151.9L2342.4 153.0L2345.6 154.9L2348.8 157.5L2352.0 160.8L2355.2 164.8L2358.4 169.4L2361.6 174.6L2364.8 180.4L2368.0 186.8L2371.2 193.7L2374.4 201.1L2377.6 208.9L2380.8 217.2L2384.0 225.7L2387.2 234.6L2390.4 243.7L2393.6 253.1L2396.8 262.5L2400.0 272.1L2403.2 281.7L2406.4 291.3L2409.6 300.8L2412.8 310.2L2416.0 319.4L2419.2 328.4L2422.4 337.1L2425.6 345.5L2428.8 353.4L2432.0 361.0L2435.2 368.1L2438.4 374.7L2441.6 380.7L2444.8 386.2L2448.0 391.1L2451.2 395.3L2454.4 398.8L2457.6 401.7L2460.8 403.9L2464.0 405.4L2467.2 406.1L2470.4 406.1L2473.6 405.4L2476.8 404.0L2480.0 401.9L2483.2 399.0L2486.4 395.5L2489.6 391.3L2492.8 386.5L2496.0 381.1L2499.2 375.1L2502.4 368.5L2505.6 361.5L2508.8 353.9L2512.0 346.0L2515.2 337.6L2518.4 328.9L2521.6 320.0L2524.8 310.8L2528.0 301.4L2531.2 291.9L2534.4 282.3L2537.6 272.7L2540.8 263.1L2544.0 253.6L2547.2 244.3L2550.4 235.2L2553.6 226.3L2556.8 217.7L2560.0 209.4L2563.2 201.6L2566.4 194.2L2569.6 187.2L2572.8 180.8L2576.0 175.0L2579.2 169.7L2582.4 165.1L2585.6 161.1L2588.8 157.7L2592.0 155.1L2595.2 153.1L2598.4 151.9L2601.6 151.4L2604.8 151.6L2608.0 152.6L2611.2 154.2L2614.4 156.6L2617.6 159.7L2620.8 163.4L2624.0 167.8L2627.2 172.8L2630.4 178.4L2633.6 184.6L2636.8 191.4L2640.0 198.6L2643.2 206.3L2646.4 214.4L2649.6 222.9L2652.8 231.6L2656.0 240.7L2659.2 249.9L2662.4 259.4L2665.6 268.9L2668.8 278.5L2672.0 288.1L2675.2 297.7L2678.4 307.1L2681.6 316.4L2684.8 325.4L2688.0 334.2L2691.2 342.7L2694.4 350.8L2697.6 358.5L2700.8 365.8L2704.0 372.6L2707.2 378.8L2710.4 384.5L2713.6 389.5L2716.8 394.0L2720.0 397.7L2723.2 400.8L2726.4 403.2L2729.6 404.9L2732.8 405.9L2736.0 406.2L2739.2 405.7L2742.4 404.6L2745.6 402.7L2748.8 400.1L2752.0 396.8L2755.2 392.8L2758.4 388.2L2761.6 383.0L2764.8 377.1L2768.0 370.8L2771.2 363.9L2774.4 356.5L2777.6 348.7L2780.8 340.4L2784.0 331.9L2787.2 323.0L2790.4 313.9L2793.6 304.5L2796.8 295.1L2800.0 285.5L2803.2 275.9L2806.4 266.3L2809.6 256.8L2812.8 247.4L2816.0 238.2L2819.2 229.2L2822.4 220.5L2825.6 212.1L2828.8 204.1L2832.0 196.6L2835.2 189.5L2838.4 182.9L2841.6 176.9L2844.8 171.4L2848.0 166.5L2851.2 162.3L2854.4 158.8L2857.6 155.9L2860.8 153.7L2864.0 152.2L2867.2 151.5L2870.4 151.5L2873.6 152.2L2876.8 153.6L2880.0 155.7L2883.2 158.6L2886.4 162.1L2889.6 166.3L2892.8 171.1L2896.0 176.5L2899.2 182.5L2902.4 189.1L2905.6 196.1L2908.8 203.7L2912.0 211.6L2915.2 220.0L2918.4 228.7L2921.6 237.6L2924.8 246.8L2928.0 256.2L2931.2 265.7L2934.4 275.3L2937.6 284.9L2940.8 294.5L2944.0 304.0L2947.2 313.3L2950.4 322.4L2953.6 331.3L2956.8 339.9L2960.0 348.2L2963.2 356.0L2966.4 363.4L2969.6 370.4L2972.8 376.8L2976.0 382.6L2979.2 387.9L2982.4 392.5L2985.6 396.5L2988.8 399.9L2992.0 402.5L2995.2 404.5L2998.4 405.7L3001.6 406.2L3004.8 406.0L3008.0 405.0L3011.2 403.4L3014.4 401.0L3017.6 397.9L3020.8 394.2L3024.0 389.8L3027.2 384.8L3030.4 379.1L3033.6 373.0L3036.8 366.2L3040.0 359.0L3043.2 351.3L3046.4 343.2L3049.6 334.7L3052.8 326.0L3056.0 316.9L3059.2 307.7L3062.4 298.2L3065.6 288.7L3068.8 279.1L3072.0 269.5L3075.2 259.9L3078.4 250.5L3081.6 241.2L3084.8 232.2L3088.0 223.4L3091.2 214.9L3094.4 206.8L3097.6 199.1L3100.8 191.8L3104.0 185.0L3107.2 178.8L3110.4 173.1L3113.6 168.1L3116.8 163.6L3120.0 159.9L3123.2 156.8L3126.4 154.4L3129.6 152.7L3132.8 151.7L3136.0 151.4L3139.2 151.9L3142.4 153.1L3145.6 154.9L3148.8 157.5L3152.0 160.8L3155.2 164.8L3158.4 169.4L3161.6 174.6L3164.8 180.5L3168.0 186.8L3171.2 193.7L3174.4 201.1L3177.6 209.0L3180.8 217.2L3184.0 225.7L3187.2 234.6L3190.4 243.8L3193.6 253.1L3196.8 262.6L3200.0 272.1L3203.2 281.7L3206.4 291.3L3209.6 300.8L3212.8 310.2L3216.0 319.4L3219.2 328.4L3222.4 337.1L3225.6 345.5L3228.8 353.5L3232.0 361.0L3235.2 368.1L3238.4 374.7L3241.6 380.7L3244.8 386.2L3248.0 391.1L3251.2 395.3L3254.4 398.8L3257.6 401.7L3260.8 403.9L3264.0 405.4L3267.2 406.1L3270.4 406.1L3273.6 405.4L3276.8 404.0" stroke="url(#pw2)"/></g><path d="M19.3 408.4h4.400l1.200-3.500l0.600-2.500h-8l0.600 2.500zM61.0 149.2h4.400l1.200 3.500l0.600 2.500h-8l0.600-2.500zM102.7 408.4h4.400l1.200-3.500l0.600-2.500h-8l0.600 2.500zM144.3 149.2h4.400l1.200 3.500l0.600 2.500h-8l0.600-2.500zM186.0 408.4h4.400l1.200-3.500l0.600-2.500h-8l0.600 2.500zM227.7 149.2h4.400l1.200 3.500l0.600 2.500h-8l0.600-2.500zM269.3 408.4h4.400l1.200-3.500l0.600-2.500h-8l0.600 2.500zM311.0 149.2h4.400l1.200 3.500l0.600 2.500h-8l0.600-2.500zM352.7 408.4h4.400l1.200-3.500l0.600-2.500h-8l0.600 2.500zM394.3 149.2h4.400l1.200 3.500l0.600 2.500h-8l0.600-2.500zM436.0 408.4h4.400l1.200-3.500l0.600-2.500h-8l0.600 2.500zM477.7 149.2h4.400l1.200 3.500l0.600 2.500h-8l0.600-2.500zM519.3 408.4h4.400l1.200-3.500l0.600-2.500h-8l0.600 2.500zM561.0 149.2h4.400l1.200 3.500l0.600 2.500h-8l0.600-2.500zM602.7 408.4h4.400l1.200-3.500l0.600-2.500h-8l0.600 2.500zM644.3 149.2h4.400l1.200 3.500l0.600 2.500h-8l0.600-2.500zM686.0 408.4h4.400l1.200-3.500l0.600-2.500h-8l0.600 2.500zM727.7 149.2h4.400l1.200 3.500l0.600 2.500h-8l0.600-2.500zM769.3 408.4h4.400l1.200-3.500l0.600-2.500h-8l0.600 2.500zM811.0 149.2h4.400l1.200 3.500l0.600 2.500h-8l0.600-2.500zM852.7 408.4h4.400l1.200-3.500l0.600-2.500h-8l0.600 2.500zM894.3 149.2h4.400l1.200 3.500l0.600 2.500h-8l0.600-2.500zM936.0 408.4h4.400l1.200-3.500l0.600-2.500h-8l0.600 2.500zM977.7 149.2h4.400l1.200 3.500l0.600 2.500h-8l0.600-2.500zM1019.3 408.4h4.400l1.200-3.500l0.600-2.500h-8l0.600 2.500z" fill="#00e8f0"/><path d="M21.5 408.2v2.500M63.2 149.4v-2.500M104.9 408.2v2.500M146.5 149.4v-2.500M188.2 408.2v2.500M229.9 149.4v-2.500M271.5 408.2v2.500M313.2 149.4v-2.500M354.9 408.2v2.500M396.5 149.4v-2.500M438.2 408.2v2.500M479.9 149.4v-2.500M521.5 408.2v2.500M563.2 149.4v-2.500M604.9 408.2v2.500M646.5 149.4v-2.500M688.2 408.2v2.500M729.9 149.4v-2.500M771.5 408.2v2.500M813.2 149.4v-2.500M854.9 408.2v2.500M896.5 149.4v-2.500M938.2 408.2v2.500M979.9 149.4v-2.500M1021.5 408.2v2.500" stroke="#00e8f0" stroke-width="4" fill="none" opacity="0.45"/>
<defs><pattern id="pw4" patternUnits="userSpaceOnUse" width="16.00" height="6.00"><rect width="16.00" height="6.00" fill="#007800"/><rect x="0.00" y="-3.00" width="3.20" height="2" fill="#00f000"/><rect x="0.00" y="0.00" width="3.20" height="2" fill="#00f000"/><rect x="0.00" y="3.00" width="3.20" height="2" fill="#00f000"/><rect x="3.20" y="-2.00" width="3.20" height="2" fill="#00f000"/><rect x="3.20" y="1.00" width="3.20" height="2" fill="#00f000"/><rect x="3.20" y="4.00" width="3.20" height="2" fill="#00f000"/><rect x="6.40" y="-1.00" width="3.20" height="2" fill="#00f000"/><rect x="6.40" y="2.00" width="3.20" height="2" fill="#00f000"/><rect x="6.40" y="5.00" width="3.20" height="2" fill="#00f000"/><rect x="9.60" y="-3.00" width="3.20" height="2" fill="#00f000"/><rect x="9.60" y="0.00" width="3.20" height="2" fill="#00f000"/><rect x="9.60" y="3.00" width="3.20" height="2" fill="#00f000"/><rect x="12.80" y="-1.00" width="3.20" height="2" fill="#00f000"/><rect x="12.80" y="2.00" width="3.20" height="2" fill="#00f000"/><rect x="12.80" y="5.00" width="3.20" height="2" fill="#00f000"/></pattern></defs><g fill="none" stroke-width="4.16" stroke-linejoin="round" stroke-linecap="round" transform="scale(0.3125 1)"><path d="M57.6 324.7L60.8 322.6L64.0 321.2L67.2 320.6L70.4 320.6L73.6 321.4L76.8 323.0L80.0 325.2L83.2 328.2L86.4 331.8L89.6 336.1L92.8 341.0L96.0 346.6L99.2 352.7L102.4 359.4L105.6 366.6L108.8 374.3L112.0 382.3L115.2 390.8L118.4 399.6L121.6 408.7L124.8 418.0L128.0 427.5L131.2 437.1L134.4 446.7L137.6 456.4L140.8 466.1L144.0 475.6L147.2 485.0L150.4 494.2L153.6 503.1L156.8 511.8L160.0 520.0L163.2 527.9L166.4 535.3L169.6 542.2L172.8 548.6L176.0 554.5L179.2 559.7L182.4 564.3L185.6 568.2L188.8 571.5L192.0 574.1L195.2 575.9L198.4 577.1L201.6 577.5L204.8 577.2L208.0 576.1L211.2 574.4L214.4 571.9L217.6 568.7L220.8 564.9L224.0 560.3L227.2 555.2L230.4 549.4L233.6 543.1L236.8 536.3L240.0 528.9L243.2 521.1L246.4 512.9L249.6 504.3L252.8 495.4L256.0 486.2L259.2 476.9L262.4 467.3L265.6 457.7L268.8 448.0L272.0 438.4L275.2 428.7L278.4 419.2L281.6 409.9L284.8 400.8L288.0 392.0L291.2 383.4L294.4 375.3L297.6 367.6L300.8 360.3L304.0 353.6L307.2 347.4L310.4 341.7L313.6 336.7L316.8 332.3L320.0 328.6L323.2 325.6L326.4 323.2L329.6 321.6L332.8 320.7L336.0 320.5L339.2 321.1L342.4 322.4L345.6 324.4L348.8 327.1L352.0 330.5L355.2 334.6L358.4 339.3L361.6 344.7L364.8 350.6L368.0 357.1L371.2 364.1L374.4 371.7L377.6 379.6L380.8 387.9L384.0 396.6L387.2 405.6L390.4 414.9L393.6 424.3L396.8 433.9L400.0 443.5L403.2 453.2L406.4 462.9L409.6 472.4L412.8 481.9L416.0 491.2L419.2 500.2L422.4 508.9L425.6 517.3L428.8 525.3L432.0 532.9L435.2 540.0L438.4 546.6L441.6 552.6L444.8 558.0L448.0 562.8L451.2 567.0L454.4 570.5L457.6 573.3L460.8 575.4L464.0 576.8L467.2 577.4L470.4 577.4L473.6 576.6L476.8 575.0L480.0 572.8L483.2 569.8L486.4 566.2L489.6 561.9L492.8 557.0L496.0 551.4L499.2 545.3L502.4 538.6L505.6 531.4L508.8 523.7L512.0 515.7L515.2 507.2L518.4 498.4L521.6 489.3L524.8 480.0L528.0 470.5L531.2 460.9L534.4 451.3L537.6 441.6L540.8 431.9L544.0 422.4L547.2 413.0L550.4 403.8L553.6 394.9L556.8 386.2L560.0 378.0L563.2 370.1L566.4 362.7L569.6 355.8L572.8 349.4L576.0 343.5L579.2 338.3L582.4 333.7L585.6 329.8L588.8 326.5L592.0 323.9L595.2 322.1L598.4 320.9L601.6 320.5L604.8 320.8L608.0 321.9L611.2 323.6L614.4 326.1L617.6 329.3L620.8 333.1L624.0 337.7L627.2 342.8L630.4 348.6L633.6 354.9L636.8 361.7L640.0 369.1L643.2 376.9L646.4 385.1L649.6 393.7L652.8 402.6L656.0 411.8L659.2 421.1L662.4 430.7L665.6 440.3L668.8 450.0L672.0 459.7L675.2 469.3L678.4 478.8L681.6 488.1L684.8 497.2L688.0 506.0L691.2 514.6L694.4 522.7L697.6 530.4L700.8 537.7L704.0 544.4L707.2 550.6L710.4 556.3L713.6 561.3L716.8 565.7L720.0 569.4L723.2 572.4L726.4 574.8L729.6 576.4L732.8 577.3L736.0 577.5L739.2 576.9L742.4 575.6L745.6 573.6L748.8 570.9L752.0 567.5L755.2 563.4L758.4 558.7L761.6 553.3L764.8 547.4L768.0 540.9L771.2 533.9L774.4 526.3L777.6 518.4L780.8 510.0L784.0 501.4L787.2 492.4L790.4 483.1L793.6 473.7L796.8 464.1L800.0 454.5L803.2 444.8L806.4 435.1L809.6 425.5L812.8 416.1L816.0 406.8L819.2 397.8L822.4 389.1L825.6 380.7L828.8 372.7L832.0 365.1L835.2 358.0L838.4 351.4L841.6 345.4L844.8 340.0L848.0 335.2L851.2 331.0L854.4 327.5L857.6 324.7L860.8 322.6L864.0 321.2L867.2 320.6L870.4 320.6L873.6 321.4L876.8 323.0L880.0 325.2L883.2 328.2L886.4 331.8L889.6 336.1L892.8 341.0L896.0 346.6L899.2 352.7L902.4 359.4L905.6 366.6L908.8 374.3L912.0 382.4L915.2 390.8L918.4 399.6L921.6 408.7L924.8 418.0L928.0 427.5L931.2 437.1L934.4 446.7L937.6 456.4L940.8 466.1L944.0 475.6L947.2 485.0L950.4 494.2L953.6 503.1L956.8 511.8L960.0 520.0L963.2 527.9L966.4 535.3L969.6 542.2L972.8 548.6L976.0 554.5L979.2 559.7L982.4 564.3L985.6 568.2L988.8 571.5L992.0 574.1L995.2 575.9L998.4 577.1L1001.6 577.5L1004.8 577.2L1008.0 576.1L1011.2 574.4L1014.4 571.9L1017.6 568.7L1020.8 564.8L1024.0 560.3L1027.2 555.2L1030.4 549.4L1033.6 543.1L1036.8 536.2L1040.0 528.9L1043.2 521.1L1046.4 512.9L1049.6 504.3L1052.8 495.4L1056.0 486.2L1059.2 476.9L1062.4 467.3L1065.6 457.7L1068.8 448.0L1072.0 438.3L1075.2 428.7L1078.4 419.2L1081.6 409.9L1084.8 400.8L1088.0 391.9L1091.2 383.4L1094.4 375.3L1097.6 367.6L1100.8 360.3L1104.0 353.6L1107.2 347.4L1110.4 341.7L1113.6 336.7L1116.8 332.3L1120.0 328.6L1123.2 325.6L1126.4 323.2L1129.6 321.6L1132.8 320.7L1136.0 320.5L1139.2 321.1L1142.4 322.4L1145.6 324.4L1148.8 327.1L1152.0 330.5L1155.2 334.6L1158.4 339.3L1161.6 344.7L1164.8 350.6L1168.0 357.1L1171.2 364.2L1174.4 371.7L1177.6 379.6L1180.8 388.0L1184.0 396.6L1187.2 405.6L1190.4 414.9L1193.6 424.3L1196.8 433.9L1200.0 443.5L1203.2 453.2L1206.4 462.9L1209.6 472.5L1212.8 481.9L1216.0 491.2L1219.2 500.2L1222.4 508.9L1225.6 517.3L1228.8 525.3L1232.0 532.9L1235.2 540.0L1238.4 546.6L1241.6 552.6L1244.8 558.0L1248.0 562.8L1251.2 567.0L1254.4 570.5L1257.6 573.3L1260.8 575.4L1264.0 576.8L1267.2 577.4L1270.4 577.4L1273.6 576.6L1276.8 575.0L1280.0 572.8L1283.2 569.8L1286.4 566.2L1289.6 561.9L1292.8 557.0L1296.0 551.4L1299.2 545.3L1302.4 538.6L1305.6 531.4L1308.8 523.7L1312.0 515.6L1315.2 507.2L1318.4 498.4L1321.6 489.3L1324.8 480.0L1328.0 470.5L1331.2 460.9L1334.4 451.2L1337.6 441.6L1340.8 431.9L1344.0 422.4L1347.2 413.0L1350.4 403.8L1353.6 394.9L1356.8 386.2L1360.0 378.0L1363.2 370.1L1366.4 362.7L1369.6 355.8L1372.8 349.4L1376.0 343.5L1379.2 338.3L1382.4 333.7L1385.6 329.8L1388.8 326.5L1392.0 323.9L1395.2 322.1L1398.4 320.9L1401.6 320.5L1404.8 320.8L1408.0 321.9L1411.2 323.6L1414.4 326.1L1417.6 329.3L1420.8 333.2L1424.0 337.7L1427.2 342.8L1430.4 348.6L1433.6 354.9L1436.8 361.8L1440.0 369.1L1443.2 376.9L1446.4 385.1L1449.6 393.7L1452.8 402.6L1456.0 411.8L1459.2 421.1L1462.4 430.7L1465.6 440.3L1468.8 450.0L1472.0 459.7L1475.2 469.3L1478.4 478.8L1481.6 488.1L1484.8 497.2L1488.0 506.1L1491.2 514.6L1494.4 522.7L1497.6 530.4L1500.8 537.7L1504.0 544.4L1507.2 550.6L1510.4 556.3L1513.6 561.3L1516.8 565.7L1520.0 569.4L1523.2 572.4L1526.4 574.8L1529.6 576.4L1532.8 577.3L1536.0 577.5L1539.2 576.9L1542.4 575.6L1545.6 573.6L1548.8 570.9L1552.0 567.5L1555.2 563.4L1558.4 558.7L1561.6 553.3L1564.8 547.4L1568.0 540.9L1571.2 533.8L1574.4 526.3L1577.6 518.4L1580.8 510.0L1584.0 501.3L1587.2 492.4L1590.4 483.1L1593.6 473.7L1596.8 464.1L1600.0 454.5L1603.2 444.8L1606.4 435.1L1609.6 425.5L1612.8 416.1L1616.0 406.8L1619.2 397.8L1622.4 389.1L1625.6 380.7L1628.8 372.7L1632.0 365.1L1635.2 358.0L1638.4 351.4L1641.6 345.4L1644.8 340.0L1648.0 335.2L1651.2 331.0L1654.4 327.5L1657.6 324.7L1660.8 322.6L1664.0 321.2L1667.2 320.6L1670.4 320.6L1673.6 321.4L1676.8 323.0L1680.0 325.2L1683.2 328.2L1686.4 331.8L1689.6 336.1L1692.8 341.0L1696.0 346.6L1699.2 352.7L1702.4 359.4L1705.6 366.6L1708.8 374.3L1712.0 382.4L1715.2 390.8L1718.4 399.6L1721.6 408.7L1724.8 418.0L1728.0 427.5L1731.2 437.1L1734.4 446.8L1737.6 456.4L1740.8 466.1L1744.0 475.6L1747.2 485.0L1750.4 494.2L1753.6 503.1L1756.8 511.8L1760.0 520.0L1763.2 527.9L1766.4 535.3L1769.6 542.2L1772.8 548.6L1776.0 554.5L1779.2 559.7L1782.4 564.3L1785.6 568.2L1788.8 571.5L1792.0 574.1L1795.2 575.9L1798.4 577.1L1801.6 577.5L1804.8 577.2L1808.0 576.1L1811.2 574.4L1814.4 571.9L1817.6 568.7L1820.8 564.8L1824.0 560.3L1827.2 555.2L1830.4 549.4L1833.6 543.1L1836.8 536.2L1840.0 528.9L1843.2 521.1L1846.4 512.9L1849.6 504.3L1852.8 495.4L1856.0 486.2L1859.2 476.9L1862.4 467.3L1865.6 457.7L1868.8 448.0L1872.0 438.3L1875.2 428.7L1878.4 419.2L1881.6 409.9L1884.8 400.8L1888.0 391.9L1891.2 383.4L1894.4 375.3L1897.6 367.6L1900.8 360.3L1904.0 353.6L1907.2 347.4L1910.4 341.7L1913.6 336.7L1916.8 332.3L1920.0 328.6L1923.2 325.6L1926.4 323.2L1929.6 321.6L1932.8 320.7L1936.0 320.5L1939.2 321.1L1942.4 322.4L1945.6 324.4L1948.8 327.1L1952.0 330.5L1955.2 334.6L1958.4 339.3L1961.6 344.7L1964.8 350.6L1968.0 357.1L1971.2 364.2L1974.4 371.7L1977.6 379.6L1980.8 388.0L1984.0 396.7L1987.2 405.6L1990.4 414.9L1993.6 424.3L1996.8 433.9L2000.0 443.5L2003.2 453.2L2006.4 462.9L2009.6 472.5L2012.8 481.9L2016.0 491.2L2019.2 500.2L2022.4 508.9L2025.6 517.3L2028.8 525.3L2032.0 532.9L2035.2 540.0L2038.4 546.6L2041.6 552.6L2044.8 558.0L2048.0 562.8L2051.2 567.0L2054.4 570.5L2057.6 573.3L2060.8 575.4L2064.0 576.8L2067.2 577.4L2070.4 577.4L2073.6 576.6L2076.8 575.0L2080.0 572.8L2083.2 569.8L2086.4 566.2L2089.6 561.9L2092.8 557.0L2096.0 551.4L2099.2 545.3L2102.4 538.6L2105.6 531.4L2108.8 523.7L2112.0 515.6L2115.2 507.2L2118.4 498.4L2121.6 489.3L2124.8 480.0L2128.0 470.5L2131.2 460.9L2134.4 451.2L2137.6 441.6L2140.8 431.9L2144.0 422.4L2147.2 413.0L2150.4 403.8L2153.6 394.8L2156.8 386.2L2160.0 378.0L2163.2 370.1L2166.4 362.7L2169.6 355.8L2172.8 349.4L2176.0 343.5L2179.2 338.3L2182.4 333.7L2185.6 329.8L2188.8 326.5L2192.0 323.9L2195.2 322.1L2198.4 320.9L2201.6 320.5L2204.8 320.8L2208.0 321.9L2211.2 323.6L2214.4 326.1L2217.6 329.3L2220.8 333.2L2224.0 337.7L2227.2 342.8L2230.4 348.6L2233.6 354.9L2236.8 361.8L2240.0 369.1L2243.2 376.9L2246.4 385.1L2249.6 393.7L2252.8 402.6L2256.0 411.8L2259.2 421.2L2262.4 430.7L2265.6 440.3L2268.8 450.0L2272.0 459.7L2275.2 469.3L2278.4 478.8L2281.6 488.1L2284.8 497.2L2288.0 506.1L2291.2 514.6L2294.4 522.7L2297.6 530.4L2300.8 537.7L2304.0 544.4L2307.2 550.7L2310.4 556.3L2313.6 561.3L2316.8 565.7L2320.0 569.4L2323.2 572.5L2326.4 574.8L2329.6 576.4L2332.8 577.3L2336.0 577.5L2339.2 576.9L2342.4 575.6L2345.6 573.6L2348.8 570.9L2352.0 567.5L2355.2 563.4L2358.4 558.7L2361.6 553.3L2364.8 547.4L2368.0 540.9L2371.2 533.8L2374.4 526.3L2377.6 518.4L2380.8 510.0L2384.0 501.3L2387.2 492.3L2390.4 483.1L2393.6 473.7L2396.8 464.1L2400.0 454.5L2403.2 444.8L2406.4 435.1L2409.6 425.5L2412.8 416.1L2416.0 406.8L2419.2 397.8L2422.4 389.1L2425.6 380.7L2428.8 372.7L2432.0 365.1L2435.2 358.0L2438.4 351.4L2441.6 345.4L2444.8 340.0L2448.0 335.2L2451.2 331.0L2454.4 327.5L2457.6 324.7L2460.8 322.6L2464.0 321.2L2467.2 320.6L2470.4 320.6L2473.6 321.4L2476.8 323.0L2480.0 325.2L2483.2 328.2L2486.4 331.8L2489.6 336.1L2492.8 341.0L2496.0 346.6L2499.2 352.7L2502.4 359.4L2505.6 366.6L2508.8 374.3L2512.0 382.4L2515.2 390.8L2518.4 399.6L2521.6 408.7L2524.8 418.0L2528.0 427.5L2531.2 437.1L2534.4 446.8L2537.6 456.5L2540.8 466.1L2544.0 475.6L2547.2 485.0L2550.4 494.2L2553.6 503.2L2556.8 511.8L2560.0 520.0L2563.2 527.9L2566.4 535.3L2569.6 542.2L2572.8 548.6L2576.0 554.5L2579.2 559.7L2582.4 564.3L2585.6 568.2L2588.8 571.5L2592.0 574.1L2595.2 575.9L2598.4 577.1L2601.6 577.5L2604.8 577.2L2608.0 576.1L2611.2 574.4L2614.4 571.9L2617.6 568.7L2620.8 564.8L2624.0 560.3L2627.2 555.2L2630.4 549.4L2633.6 543.1L2636.8 536.2L2640.0 528.9L2643.2 521.1L2646.4 512.8L2649.6 504.3L2652.8 495.4L2656.0 486.2L2659.2 476.8L2662.4 467.3L2665.6 457.7L2668.8 448.0L2672.0 438.3L2675.2 428.7L2678.4 419.2L2681.6 409.9L2684.8 400.8L2688.0 391.9L2691.2 383.4L2694.4 375.3L2697.6 367.6L2700.8 360.3L2704.0 353.6L2707.2 347.3L2710.4 341.7L2713.6 336.7L2716.8 332.3L2720.0 328.6L2723.2 325.5L2726.4 323.2L2729.6 321.6L2732.8 320.7L2736.0 320.5L2739.2 321.1L2742.4 322.4L2745.6 324.4L2748.8 327.1L2752.0 330.5L2755.2 334.6L2758.4 339.3L2761.6 344.7L2764.8 350.6L2768.0 357.1L2771.2 364.2L2774.4 371.7L2777.6 379.6L2780.8 388.0L2784.0 396.7L2787.2 405.7L2790.4 414.9L2793.6 424.3L2796.8 433.9L2800.0 443.5L2803.2 453.2L2806.4 462.9L2809.6 472.5L2812.8 481.9L2816.0 491.2L2819.2 500.2L2822.4 508.9L2825.6 517.3L2828.8 525.3L2832.0 532.9L2835.2 540.0L2838.4 546.6L2841.6 552.6L2844.8 558.0L2848.0 562.8L2851.2 567.0L2854.4 570.5L2857.6 573.3L2860.8 575.4L2864.0 576.8L2867.2 577.4L2870.4 577.4L2873.6 576.6L2876.8 575.0L2880.0 572.8L2883.2 569.8L2886.4 566.2L2889.6 561.9L2892.8 557.0L2896.0 551.4L2899.2 545.3L2902.4 538.6L2905.6 531.4L2908.8 523.7L2912.0 515.6L2915.2 507.2L2918.4 498.4L2921.6 489.3L2924.8 480.0L2928.0 470.5L2931.2 460.9L2934.4 451.2L2937.6 441.5L2940.8 431.9L2944.0 422.4L2947.2 413.0L2950.4 403.8L2953.6 394.8L2956.8 386.2L2960.0 377.9L2963.2 370.1L2966.4 362.7L2969.6 355.7L2972.8 349.4L2976.0 343.5L2979.2 338.3L2982.4 333.7L2985.6 329.7L2988.8 326.5L2992.0 323.9L2995.2 322.1L2998.4 320.9L3001.6 320.5L3004.8 320.8L3008.0 321.9L3011.2 323.6L3014.4 326.1L3017.6 329.3L3020.8 333.2L3024.0 337.7L3027.2 342.8L3030.4 348.6L3033.6 354.9L3036.8 361.8L3040.0 369.1L3043.2 376.9L3046.4 385.2L3049.6 393.7L3052.8 402.6L3056.0 411.8L3059.2 421.2L3062.4 430.7L3065.6 440.3L3068.8 450.0L3072.0 459.7L3075.2 469.3L3078.4 478.8L3081.6 488.1L3084.8 497.2L3088.0 506.1L3091.2 514.6L3094.4 522.7L3097.6 530.4L3100.8 537.7L3104.0 544.4L3107.2 550.7L3110.4 556.3L3113.6 561.3L3116.8 565.7L3120.0 569.4L3123.2 572.5L3126.4 574.8L3129.6 576.4L3132.8 577.3L3136.0 577.5L3139.2 576.9L3142.4 575.6L3145.6 573.6L3148.8 570.9L3152.0 567.5L3155.2 563.4L3158.4 558.7L3161.6 553.3L3164.8 547.4L3168.0 540.9L3171.2 533.8L3174.4 526.3L3177.6 518.4L3180.8 510.0L3184.0 501.3L3187.2 492.3L3190.4 483.1L3193.6 473.7L3196.8 464.1L3200.0 454.5L3203.2 444.8L3206.4 435.1L3209.6 425.5L3212.8 416.1L3216.0 406.8L3219.2 397.8L3222.4 389.1L3225.6 380.7L3228.8 372.7L3232.0 365.1L3235.2 358.0L3238.4 351.4L3241.6 345.4L3244.8 340.0L3248.0 335.2L3251.2 331.0L3254.4 327.5L3257.6 324.7L3260.8 322.6L3264.0 321.2L3267.2 320.6L3270.4 320.6L3273.6 321.4L3276.8 323.0" stroke="url(#pw4)"/></g><path d="M19.2 318.3h4.400l1.200 3.500l0.600 2.500h-8l0.600-2.500zM60.9 579.7h4.400l1.200-3.500l0.600-2.500h-8l0.600 2.500zM102.5 318.3h4.400l1.200 3.500l0.600 2.500h-8l0.600-2.500zM144.2 579.7h4.400l1.200-3.500l0.600-2.500h-8l0.600 2.500zM185.9 318.3h4.400l1.200 3.500l0.600 2.500h-8l0.600-2.500zM227.5 579.7h4.400l1.200-3.500l0.600-2.500h-8l0.600 2.500zM269.2 318.3h4.400l1.200 3.500l0.600 2.500h-8l0.600-2.500zM310.9 579.7h4.400l1.200-3.500l0.600-2.500h-8l0.600 2.500zM352.5 318.3h4.400l1.200 3.500l0.600 2.500h-8l0.600-2.500zM394.2 579.7h4.400l1.200-3.500l0.600-2.500h-8l0.600 2.500zM435.9 318.3h4.400l1.200 3.500l0.600 2.500h-8l0.600-2.500zM477.5 579.7h4.400l1.200-3.500l0.600-2.500h-8l0.600 2.500zM519.2 318.3h4.400l1.200 3.500l0.600 2.500h-8l0.600-2.500zM560.9 579.7h4.400l1.200-3.500l0.600-2.500h-8l0.600 2.500zM602.5 318.3h4.400l1.200 3.500l0.600 2.500h-8l0.600-2.500zM644.2 579.7h4.400l1.200-3.500l0.600-2.500h-8l0.600 2.500zM685.9 318.3h4.400l1.200 3.500l0.600 2.500h-8l0.600-2.500zM727.5 579.7h4.400l1.200-3.500l0.600-2.500h-8l0.600 2.500zM769.2 318.3h4.400l1.200 3.500l0.600 2.500h-8l0.600-2.500zM810.9 579.7h4.400l1.200-3.500l0.600-2.500h-8l0.600 2.500zM852.5 318.3h4.400l1.200 3.500l0.600 2.500h-8l0.600-2.500zM894.2 579.7h4.400l1.200-3.500l0.600-2.500h-8l0.600 2.500zM935.9 318.3h4.400l1.200 3.500l0.600 2.500h-8l0.600-2.500zM977.5 579.7h4.400l1.200-3.500l0.600-2.500h-8l0.600 2.500zM1019.2 318.3h4.400l1.200 3.500l0.600 2.500h-8l0.600-2.500z" fill="#00f000"/><path d="M21.4 318.5v-2.500M63.1 579.5v2.500M104.7 318.5v-2.500M146.4 579.5v2.500M188.1 318.5v-2.500M229.7 579.5v2.500M271.4 318.5v-2.500M313.1 579.5v2.500M354.7 318.5v-2.500M396.4 579.5v2.500M438.1 318.5v-2.500M479.7 579.5v2.500M521.4 318.5v-2.500M563.1 579.5v2.500M604.7 318.5v-2.500M646.4 579.5v2.500M688.1 318.5v-2.500M729.7 579.5v2.500M771.4 318.5v-2.500M813.1 579.5v2.500M854.7 318.5v-2.500M896.4 579.5v2.500M938.1 318.5v-2.500M979.7 579.5v2.500M1021.4 318.5v-2.500" stroke="#00f000" stroke-width="4" fill="none" opacity="0.45"/>
<defs><pattern id="pw3" patternUnits="userSpaceOnUse" width="16.00" height="6.00"><rect width="16.00" height="6.00" fill="#980098"/><rect x="0.00" y="-3.00" width="3.20" height="2" fill="#f400f4"/><rect x="0.00" y="0.00" width="3.20" height="2" fill="#f400f4"/><rect x="0.00" y="3.00" width="3.20" height="2" fill="#f400f4"/><rect x="3.20" y="-2.00" width="3.20" height="2" fill="#f400f4"/><rect x="3.20" y="1.00" width="3.20" height="2" fill="#f400f4"/><rect x="3.20" y="4.00" width="3.20" height="2" fill="#f400f4"/><rect x="6.40" y="-1.00" width="3.20" height="2" fill="#f400f4"/><rect x="6.40" y="2.00" width="3.20" height="2" fill="#f400f4"/><rect x="6.40" y="5.00" width="3.20" height="2" fill="#f400f4"/><rect x="9.60" y="-3.00" width="3.20" height="2" fill="#f400f4"/><rect x="9.60" y="0.00" width="3.20" height="2" fill="#f400f4"/><rect x="9.60" y="3.00" width="3.20" height="2" fill="#f400f4"/><rect x="12.80" y="-1.00" width="3.20" height="2" fill="#f400f4"/><rect x="12.80" y="2.00" width="3.20" height="2" fill="#f400f4"/><rect x="12.80" y="5.00" width="3.20" height="2" fill="#f400f4"/></pattern></defs><g fill="none" stroke-width="5.44" stroke-linejoin="round" stroke-linecap="round" transform="scale(0.3125 1)"><path d="M57.6 438.6L60.8 429.1L64.0 419.6L67.2 409.9L70.4 400.3L73.6 390.7L76.8 381.3L80.0 372.0L83.2 362.9L86.4 354.0L89.6 345.5L92.8 337.3L96.0 329.6L99.2 322.3L102.4 315.5L105.6 309.2L108.8 303.5L112.0 298.4L115.2 293.9L118.4 290.1L121.6 287.0L124.8 284.5L128.0 282.8L131.2 281.8L134.4 281.5L137.6 281.9L140.8 283.1L144.0 285.0L147.2 287.6L150.4 290.8L153.6 294.8L156.8 299.4L160.0 304.6L163.2 310.4L166.4 316.8L169.6 323.7L172.8 331.1L176.0 338.9L179.2 347.2L182.4 355.8L185.6 364.7L188.8 373.8L192.0 383.1L195.2 392.6L198.4 402.2L201.6 411.9L204.8 421.5L208.0 431.0L211.2 440.5L214.4 449.7L217.6 458.7L220.8 467.5L224.0 475.9L227.2 483.9L230.4 491.5L233.6 498.6L236.8 505.3L240.0 511.4L243.2 516.9L246.4 521.8L249.6 526.0L252.8 529.6L256.0 532.5L259.2 534.7L262.4 536.2L265.6 537.0L268.8 537.0L272.0 536.4L275.2 535.0L278.4 532.8L281.6 530.0L284.8 526.5L288.0 522.4L291.2 517.5L294.4 512.1L297.6 506.1L300.8 499.6L304.0 492.5L307.2 484.9L310.4 477.0L313.6 468.6L316.8 459.9L320.0 450.9L323.2 441.7L326.4 432.3L329.6 422.8L332.8 413.2L336.0 403.5L339.2 393.9L342.4 384.4L345.6 375.0L348.8 365.9L352.0 356.9L355.2 348.3L358.4 340.0L361.6 332.1L364.8 324.7L368.0 317.7L371.2 311.2L374.4 305.3L377.6 300.0L380.8 295.4L384.0 291.3L387.2 288.0L390.4 285.3L393.6 283.3L396.8 282.1L400.0 281.5L403.2 281.7L406.4 282.6L409.6 284.3L412.8 286.6L416.0 289.7L419.2 293.4L422.4 297.8L425.6 302.8L428.8 308.4L432.0 314.6L435.2 321.4L438.4 328.6L441.6 336.3L444.8 344.4L448.0 352.9L451.2 361.7L454.4 370.7L457.6 380.0L460.8 389.5L464.0 399.0L467.2 408.7L470.4 418.3L473.6 427.9L476.8 437.3L480.0 446.7L483.2 455.8L486.4 464.6L489.6 473.1L492.8 481.3L496.0 489.0L499.2 496.3L502.4 503.1L505.6 509.4L508.8 515.1L512.0 520.2L515.2 524.7L518.4 528.5L521.6 531.6L524.8 534.1L528.0 535.8L531.2 536.8L534.4 537.1L537.6 536.7L540.8 535.5L544.0 533.6L547.2 531.0L550.4 527.8L553.6 523.8L556.8 519.2L560.0 514.0L563.2 508.2L566.4 501.8L569.6 494.9L572.8 487.5L576.0 479.7L579.2 471.4L582.4 462.8L585.6 453.9L588.8 444.8L592.0 435.4L595.2 425.9L598.4 416.4L601.6 406.7L604.8 397.1L608.0 387.6L611.2 378.1L614.4 368.9L617.6 359.9L620.8 351.1L624.0 342.7L627.2 334.7L630.4 327.1L633.6 320.0L636.8 313.3L640.0 307.2L643.2 301.7L646.4 296.8L649.6 292.6L652.8 289.0L656.0 286.1L659.2 283.9L662.4 282.4L665.6 281.6L668.8 281.6L672.0 282.2L675.2 283.6L678.4 285.8L681.6 288.6L684.8 292.1L688.0 296.2L691.2 301.1L694.4 306.5L697.6 312.5L700.8 319.1L704.0 326.1L707.2 333.7L710.4 341.6L713.6 350.0L716.8 358.7L720.0 367.7L723.2 376.9L726.4 386.3L729.6 395.8L732.8 405.5L736.0 415.1L739.2 424.7L742.4 434.2L745.6 443.6L748.8 452.7L752.0 461.7L755.2 470.3L758.4 478.6L761.6 486.5L764.8 493.9L768.0 500.9L771.2 507.4L774.4 513.3L777.6 518.6L780.8 523.2L784.0 527.3L787.2 530.6L790.4 533.3L793.6 535.3L796.8 536.5L800.0 537.1L803.2 536.9L806.4 536.0L809.6 534.3L812.8 532.0L816.0 528.9L819.2 525.2L822.4 520.8L825.6 515.8L828.8 510.2L832.0 504.0L835.2 497.2L838.4 490.0L841.6 482.3L844.8 474.2L848.0 465.7L851.2 456.9L854.4 447.9L857.6 438.6L860.8 429.1L864.0 419.6L867.2 409.9L870.4 400.3L873.6 390.7L876.8 381.3L880.0 371.9L883.2 362.8L886.4 354.0L889.6 345.5L892.8 337.3L896.0 329.6L899.2 322.3L902.4 315.5L905.6 309.2L908.8 303.5L912.0 298.4L915.2 293.9L918.4 290.1L921.6 287.0L924.8 284.5L928.0 282.8L931.2 281.8L934.4 281.5L937.6 281.9L940.8 283.1L944.0 285.0L947.2 287.6L950.4 290.8L953.6 294.8L956.8 299.4L960.0 304.6L963.2 310.4L966.4 316.8L969.6 323.7L972.8 331.1L976.0 338.9L979.2 347.2L982.4 355.8L985.6 364.7L988.8 373.8L992.0 383.2L995.2 392.7L998.4 402.2L1001.6 411.9L1004.8 421.5L1008.0 431.0L1011.2 440.5L1014.4 449.7L1017.6 458.7L1020.8 467.5L1024.0 475.9L1027.2 483.9L1030.4 491.5L1033.6 498.6L1036.8 505.3L1040.0 511.4L1043.2 516.9L1046.4 521.8L1049.6 526.0L1052.8 529.6L1056.0 532.5L1059.2 534.7L1062.4 536.2L1065.6 537.0L1068.8 537.0L1072.0 536.4L1075.2 535.0L1078.4 532.8L1081.6 530.0L1084.8 526.5L1088.0 522.4L1091.2 517.5L1094.4 512.1L1097.6 506.1L1100.8 499.5L1104.0 492.5L1107.2 484.9L1110.4 477.0L1113.6 468.6L1116.8 459.9L1120.0 450.9L1123.2 441.7L1126.4 432.3L1129.6 422.8L1132.8 413.1L1136.0 403.5L1139.2 393.9L1142.4 384.4L1145.6 375.0L1148.8 365.8L1152.0 356.9L1155.2 348.3L1158.4 340.0L1161.6 332.1L1164.8 324.7L1168.0 317.7L1171.2 311.2L1174.4 305.3L1177.6 300.0L1180.8 295.4L1184.0 291.3L1187.2 288.0L1190.4 285.3L1193.6 283.3L1196.8 282.1L1200.0 281.5L1203.2 281.7L1206.4 282.6L1209.6 284.3L1212.8 286.6L1216.0 289.7L1219.2 293.4L1222.4 297.8L1225.6 302.8L1228.8 308.4L1232.0 314.6L1235.2 321.4L1238.4 328.6L1241.6 336.3L1244.8 344.4L1248.0 352.9L1251.2 361.7L1254.4 370.7L1257.6 380.0L1260.8 389.5L1264.0 399.0L1267.2 408.7L1270.4 418.3L1273.6 427.9L1276.8 437.3L1280.0 446.7L1283.2 455.8L1286.4 464.6L1289.6 473.1L1292.8 481.3L1296.0 489.0L1299.2 496.3L1302.4 503.1L1305.6 509.4L1308.8 515.1L1312.0 520.2L1315.2 524.7L1318.4 528.5L1321.6 531.6L1324.8 534.1L1328.0 535.8L1331.2 536.8L1334.4 537.1L1337.6 536.7L1340.8 535.5L1344.0 533.6L1347.2 531.0L1350.4 527.8L1353.6 523.8L1356.8 519.2L1360.0 514.0L1363.2 508.2L1366.4 501.8L1369.6 494.9L1372.8 487.5L1376.0 479.7L1379.2 471.4L1382.4 462.8L1385.6 453.9L1388.8 444.8L1392.0 435.4L1395.2 425.9L1398.4 416.3L1401.6 406.7L1404.8 397.1L1408.0 387.5L1411.2 378.1L1414.4 368.9L1417.6 359.9L1420.8 351.1L1424.0 342.7L1427.2 334.7L1430.4 327.1L1433.6 319.9L1436.8 313.3L1440.0 307.2L1443.2 301.7L1446.4 296.8L1449.6 292.6L1452.8 289.0L1456.0 286.1L1459.2 283.9L1462.4 282.4L1465.6 281.6L1468.8 281.6L1472.0 282.2L1475.2 283.6L1478.4 285.8L1481.6 288.6L1484.8 292.1L1488.0 296.2L1491.2 301.1L1494.4 306.5L1497.6 312.5L1500.8 319.1L1504.0 326.1L1507.2 333.7L1510.4 341.7L1513.6 350.0L1516.8 358.7L1520.0 367.7L1523.2 376.9L1526.4 386.3L1529.6 395.9L1532.8 405.5L1536.0 415.1L1539.2 424.7L1542.4 434.2L1545.6 443.6L1548.8 452.8L1552.0 461.7L1555.2 470.3L1558.4 478.6L1561.6 486.5L1564.8 493.9L1568.0 500.9L1571.2 507.4L1574.4 513.3L1577.6 518.6L1580.8 523.3L1584.0 527.3L1587.2 530.7L1590.4 533.3L1593.6 535.3L1596.8 536.5L1600.0 537.1L1603.2 536.9L1606.4 536.0L1609.6 534.3L1612.8 532.0L1616.0 528.9L1619.2 525.2L1622.4 520.8L1625.6 515.8L1628.8 510.2L1632.0 504.0L1635.2 497.2L1638.4 490.0L1641.6 482.3L1644.8 474.2L1648.0 465.7L1651.2 456.9L1654.4 447.9L1657.6 438.6L1660.8 429.1L1664.0 419.5L1667.2 409.9L1670.4 400.3L1673.6 390.7L1676.8 381.2L1680.0 371.9L1683.2 362.8L1686.4 354.0L1689.6 345.5L1692.8 337.3L1696.0 329.6L1699.2 322.3L1702.4 315.5L1705.6 309.2L1708.8 303.5L1712.0 298.4L1715.2 293.9L1718.4 290.1L1721.6 287.0L1724.8 284.5L1728.0 282.8L1731.2 281.8L1734.4 281.5L1737.6 281.9L1740.8 283.1L1744.0 285.0L1747.2 287.6L1750.4 290.8L1753.6 294.8L1756.8 299.4L1760.0 304.6L1763.2 310.4L1766.4 316.8L1769.6 323.7L1772.8 331.1L1776.0 339.0L1779.2 347.2L1782.4 355.8L1785.6 364.7L1788.8 373.8L1792.0 383.2L1795.2 392.7L1798.4 402.3L1801.6 411.9L1804.8 421.5L1808.0 431.1L1811.2 440.5L1814.4 449.7L1817.6 458.7L1820.8 467.5L1824.0 475.9L1827.2 483.9L1830.4 491.5L1833.6 498.7L1836.8 505.3L1840.0 511.4L1843.2 516.9L1846.4 521.8L1849.6 526.0L1852.8 529.6L1856.0 532.5L1859.2 534.7L1862.4 536.2L1865.6 537.0L1868.8 537.0L1872.0 536.4L1875.2 535.0L1878.4 532.8L1881.6 530.0L1884.8 526.5L1888.0 522.3L1891.2 517.5L1894.4 512.1L1897.6 506.1L1900.8 499.5L1904.0 492.5L1907.2 484.9L1910.4 476.9L1913.6 468.6L1916.8 459.9L1920.0 450.9L1923.2 441.7L1926.4 432.3L1929.6 422.7L1932.8 413.1L1936.0 403.5L1939.2 393.9L1942.4 384.4L1945.6 375.0L1948.8 365.8L1952.0 356.9L1955.2 348.3L1958.4 340.0L1961.6 332.1L1964.8 324.6L1968.0 317.7L1971.2 311.2L1974.4 305.3L1977.6 300.0L1980.8 295.3L1984.0 291.3L1987.2 287.9L1990.4 285.3L1993.6 283.3L1996.8 282.1L2000.0 281.5L2003.2 281.7L2006.4 282.6L2009.6 284.3L2012.8 286.6L2016.0 289.7L2019.2 293.4L2022.4 297.8L2025.6 302.8L2028.8 308.4L2032.0 314.6L2035.2 321.4L2038.4 328.6L2041.6 336.3L2044.8 344.4L2048.0 352.9L2051.2 361.7L2054.4 370.7L2057.6 380.0L2060.8 389.5L2064.0 399.1L2067.2 408.7L2070.4 418.3L2073.6 427.9L2076.8 437.4L2080.0 446.7L2083.2 455.8L2086.4 464.6L2089.6 473.1L2092.8 481.3L2096.0 489.0L2099.2 496.3L2102.4 503.1L2105.6 509.4L2108.8 515.1L2112.0 520.2L2115.2 524.7L2118.4 528.5L2121.6 531.6L2124.8 534.1L2128.0 535.8L2131.2 536.8L2134.4 537.1L2137.6 536.7L2140.8 535.5L2144.0 533.6L2147.2 531.0L2150.4 527.8L2153.6 523.8L2156.8 519.2L2160.0 514.0L2163.2 508.2L2166.4 501.8L2169.6 494.9L2172.8 487.5L2176.0 479.6L2179.2 471.4L2182.4 462.8L2185.6 453.9L2188.8 444.8L2192.0 435.4L2195.2 425.9L2198.4 416.3L2201.6 406.7L2204.8 397.1L2208.0 387.5L2211.2 378.1L2214.4 368.9L2217.6 359.9L2220.8 351.1L2224.0 342.7L2227.2 334.7L2230.4 327.1L2233.6 319.9L2236.8 313.3L2240.0 307.2L2243.2 301.7L2246.4 296.8L2249.6 292.6L2252.8 289.0L2256.0 286.1L2259.2 283.9L2262.4 282.4L2265.6 281.6L2268.8 281.6L2272.0 282.2L2275.2 283.6L2278.4 285.8L2281.6 288.6L2284.8 292.1L2288.0 296.3L2291.2 301.1L2294.4 306.5L2297.6 312.5L2300.8 319.1L2304.0 326.1L2307.2 333.7L2310.4 341.7L2313.6 350.0L2316.8 358.7L2320.0 367.7L2323.2 376.9L2326.4 386.3L2329.6 395.9L2332.8 405.5L2336.0 415.1L2339.2 424.7L2342.4 434.2L2345.6 443.6L2348.8 452.8L2352.0 461.7L2355.2 470.3L2358.4 478.6L2361.6 486.5L2364.8 494.0L2368.0 500.9L2371.2 507.4L2374.4 513.3L2377.6 518.6L2380.8 523.3L2384.0 527.3L2387.2 530.7L2390.4 533.3L2393.6 535.3L2396.8 536.6L2400.0 537.1L2403.2 536.9L2406.4 536.0L2409.6 534.3L2412.8 532.0L2416.0 528.9L2419.2 525.2L2422.4 520.8L2425.6 515.8L2428.8 510.2L2432.0 504.0L2435.2 497.2L2438.4 490.0L2441.6 482.3L2444.8 474.2L2448.0 465.7L2451.2 456.9L2454.4 447.8L2457.6 438.6L2460.8 429.1L2464.0 419.5L2467.2 409.9L2470.4 400.3L2473.6 390.7L2476.8 381.2L2480.0 371.9L2483.2 362.8L2486.4 354.0L2489.6 345.5L2492.8 337.3L2496.0 329.6L2499.2 322.3L2502.4 315.5L2505.6 309.2L2508.8 303.5L2512.0 298.4L2515.2 293.9L2518.4 290.1L2521.6 287.0L2524.8 284.5L2528.0 282.8L2531.2 281.8L2534.4 281.5L2537.6 281.9L2540.8 283.1L2544.0 285.0L2547.2 287.6L2550.4 290.8L2553.6 294.8L2556.8 299.4L2560.0 304.6L2563.2 310.4L2566.4 316.8L2569.6 323.7L2572.8 331.1L2576.0 339.0L2579.2 347.2L2582.4 355.8L2585.6 364.7L2588.8 373.8L2592.0 383.2L2595.2 392.7L2598.4 402.3L2601.6 411.9L2604.8 421.5L2608.0 431.1L2611.2 440.5L2614.4 449.7L2617.6 458.8L2620.8 467.5L2624.0 475.9L2627.2 483.9L2630.4 491.5L2633.6 498.7L2636.8 505.3L2640.0 511.4L2643.2 516.9L2646.4 521.8L2649.6 526.0L2652.8 529.6L2656.0 532.5L2659.2 534.7L2662.4 536.2L2665.6 537.0L2668.8 537.0L2672.0 536.4L2675.2 534.9L2678.4 532.8L2681.6 530.0L2684.8 526.5L2688.0 522.3L2691.2 517.5L2694.4 512.1L2697.6 506.1L2700.8 499.5L2704.0 492.5L2707.2 484.9L2710.4 476.9L2713.6 468.6L2716.8 459.9L2720.0 450.9L2723.2 441.7L2726.4 432.3L2729.6 422.7L2732.8 413.1L2736.0 403.5L2739.2 393.9L2742.4 384.4L2745.6 375.0L2748.8 365.8L2752.0 356.9L2755.2 348.3L2758.4 340.0L2761.6 332.1L2764.8 324.6L2768.0 317.7L2771.2 311.2L2774.4 305.3L2777.6 300.0L2780.8 295.3L2784.0 291.3L2787.2 287.9L2790.4 285.3L2793.6 283.3L2796.8 282.0L2800.0 281.5L2803.2 281.7L2806.4 282.6L2809.6 284.3L2812.8 286.6L2816.0 289.7L2819.2 293.4L2822.4 297.8L2825.6 302.8L2828.8 308.4L2832.0 314.6L2835.2 321.4L2838.4 328.6L2841.6 336.3L2844.8 344.4L2848.0 352.9L2851.2 361.7L2854.4 370.8L2857.6 380.0L2860.8 389.5L2864.0 399.1L2867.2 408.7L2870.4 418.3L2873.6 427.9L2876.8 437.4L2880.0 446.7L2883.2 455.8L2886.4 464.6L2889.6 473.1L2892.8 481.3L2896.0 489.0L2899.2 496.3L2902.4 503.1L2905.6 509.4L2908.8 515.1L2912.0 520.2L2915.2 524.7L2918.4 528.5L2921.6 531.6L2924.8 534.1L2928.0 535.8L2931.2 536.8L2934.4 537.1L2937.6 536.7L2940.8 535.5L2944.0 533.6L2947.2 531.0L2950.4 527.8L2953.6 523.8L2956.8 519.2L2960.0 514.0L2963.2 508.2L2966.4 501.8L2969.6 494.9L2972.8 487.5L2976.0 479.6L2979.2 471.4L2982.4 462.8L2985.6 453.9L2988.8 444.8L2992.0 435.4L2995.2 425.9L2998.4 416.3L3001.6 406.7L3004.8 397.1L3008.0 387.5L3011.2 378.1L3014.4 368.9L3017.6 359.8L3020.8 351.1L3024.0 342.7L3027.2 334.7L3030.4 327.1L3033.6 319.9L3036.8 313.3L3040.0 307.2L3043.2 301.7L3046.4 296.8L3049.6 292.6L3052.8 289.0L3056.0 286.1L3059.2 283.9L3062.4 282.4L3065.6 281.6L3068.8 281.6L3072.0 282.2L3075.2 283.7L3078.4 285.8L3081.6 288.6L3084.8 292.1L3088.0 296.3L3091.2 301.1L3094.4 306.5L3097.6 312.5L3100.8 319.1L3104.0 326.1L3107.2 333.7L3110.4 341.7L3113.6 350.0L3116.8 358.7L3120.0 367.7L3123.2 376.9L3126.4 386.3L3129.6 395.9L3132.8 405.5L3136.0 415.1L3139.2 424.7L3142.4 434.2L3145.6 443.6L3148.8 452.8L3152.0 461.7L3155.2 470.3L3158.4 478.6L3161.6 486.5L3164.8 494.0L3168.0 500.9L3171.2 507.4L3174.4 513.3L3177.6 518.6L3180.8 523.3L3184.0 527.3L3187.2 530.7L3190.4 533.3L3193.6 535.3L3196.8 536.6L3200.0 537.1L3203.2 536.9L3206.4 536.0L3209.6 534.3L3212.8 532.0L3216.0 528.9L3219.2 525.2L3222.4 520.8L3225.6 515.8L3228.8 510.2L3232.0 504.0L3235.2 497.2L3238.4 490.0L3241.6 482.3L3244.8 474.2L3248.0 465.7L3251.2 456.9L3254.4 447.8L3257.6 438.6L3260.8 429.1L3264.0 419.5L3267.2 409.9L3270.4 400.3L3273.6 390.7L3276.8 381.2" stroke="url(#pw3)"/></g><path d="M39.7 279.3h4.400l1.200 3.500l0.600 2.500h-8l0.600-2.500zM81.4 539.3h4.400l1.200-3.500l0.600-2.500h-8l0.600 2.500zM123.0 279.3h4.400l1.200 3.500l0.600 2.500h-8l0.600-2.500zM164.7 539.3h4.400l1.200-3.500l0.600-2.500h-8l0.600 2.500zM206.4 279.3h4.400l1.200 3.500l0.600 2.500h-8l0.600-2.500zM248.0 539.3h4.400l1.200-3.500l0.600-2.500h-8l0.600 2.500zM289.7 279.3h4.400l1.200 3.500l0.600 2.500h-8l0.600-2.500zM331.4 539.3h4.400l1.200-3.500l0.600-2.500h-8l0.600 2.500zM373.0 279.3h4.400l1.200 3.500l0.600 2.500h-8l0.600-2.500zM414.7 539.3h4.400l1.200-3.500l0.600-2.500h-8l0.600 2.500zM456.4 279.3h4.400l1.200 3.500l0.600 2.500h-8l0.600-2.500zM498.0 539.3h4.400l1.200-3.500l0.600-2.500h-8l0.600 2.500zM539.7 279.3h4.400l1.200 3.500l0.600 2.500h-8l0.600-2.500zM581.4 539.3h4.400l1.200-3.500l0.600-2.500h-8l0.600 2.500zM623.0 279.3h4.400l1.200 3.500l0.600 2.500h-8l0.600-2.500zM664.7 539.3h4.400l1.200-3.500l0.600-2.500h-8l0.600 2.500zM706.4 279.3h4.400l1.200 3.500l0.600 2.500h-8l0.600-2.500zM748.0 539.3h4.400l1.200-3.500l0.600-2.500h-8l0.600 2.500zM789.7 279.3h4.400l1.200 3.500l0.600 2.500h-8l0.600-2.500zM831.4 539.3h4.400l1.200-3.500l0.600-2.500h-8l0.600 2.500zM873.0 279.3h4.400l1.200 3.500l0.600 2.500h-8l0.600-2.500zM914.7 539.3h4.400l1.200-3.500l0.600-2.500h-8l0.600 2.500zM956.4 279.3h4.400l1.200 3.500l0.600 2.500h-8l0.600-2.500zM998.0 539.3h4.400l1.200-3.500l0.600-2.500h-8l0.600 2.500z" fill="#f400f4"/><path d="M41.9 279.5v-2.500M83.6 539.1v2.500M125.2 279.5v-2.500M166.9 539.1v2.500M208.6 279.5v-2.500M250.2 539.1v2.500M291.9 279.5v-2.500M333.6 539.1v2.500M375.2 279.5v-2.500M416.9 539.1v2.500M458.6 279.5v-2.500M500.2 539.1v2.500M541.9 279.5v-2.500M583.6 539.1v2.500M625.2 279.5v-2.500M666.9 539.1v2.500M708.6 279.5v-2.500M750.2 539.1v2.500M791.9 279.5v-2.500M833.6 539.1v2.500M875.2 279.5v-2.500M916.9 539.1v2.500M958.6 279.5v-2.500M1000.2 539.1v2.500" stroke="#f400f4" stroke-width="4" fill="none" opacity="0.45"/>
</g>
<path d="M517.5 1h8l-4 4z" fill="#ffa000"/>
<rect x="517" y="5" width="8.500" height="11" rx="1" fill="#ffa000"/>
<path d="M518.500 7.500h5.500M521.300 7.500v7" stroke="#000" stroke-width="1.6" fill="none"/>
<path d="M515.5 17h12l-6 6z" fill="#ffa000"/>
<path d="M515 25q0-1 1-1h10.500q1 0 1 1v10l-6.250 4l-6.250-4z" fill="#ffa000"/>
<path d="M517 26h8.500M521.250 26v10" stroke="#000" stroke-width="2" fill="none"/>
<path d="M1010 178.500l6.500-5.500v11z" fill="#ffff00"/><rect x="1016" y="177.500" width="5" height="2" fill="#ffff00"/>
<path d="M0.5 179.5L2.500 177.5H13L20 185.5L13 193.5H2.500L0.500 191.5z" fill="#000400" stroke="#e8e800" stroke-width="1.200"/><text x="7" y="191.0" text-anchor="middle" font-family="Liberation Sans,DejaVu Sans,sans-serif" font-size="15" letter-spacing="0" fill="#f8f800" stroke="#f8f800" stroke-width="0.700">1</text>
<path d="M0.5 268.5L2.500 266.5H13L20 274.5L13 282.5H2.500L0.500 280.5z" fill="#000400" stroke="#10d8e0" stroke-width="1.200"/><text x="7" y="280.0" text-anchor="middle" font-family="Liberation Sans,DejaVu Sans,sans-serif" font-size="15" letter-spacing="0" fill="#10e8f0" stroke="#10e8f0" stroke-width="0.700">2</text>
<path d="M0.5 402.0L2.500 400.0H13L20 408.0L13 416.0H2.500L0.500 414.0z" fill="#a800a8" stroke="#a800a8" stroke-width="1.200"/><text x="7" y="413.5" text-anchor="middle" font-family="Liberation Sans,DejaVu Sans,sans-serif" font-size="15" letter-spacing="0" fill="#000" stroke="#000" stroke-width="0.700">3</text>
<path d="M2.500 400H13" stroke="#e8d0e8" stroke-width="1" fill="none"/><path d="M2.500 416.500H13L20 408.500" stroke="#200020" stroke-width="1" fill="none"/>
<path d="M0.5 439.5L2.500 437.5H13L20 445.5L13 453.5H2.500L0.500 451.5z" fill="#000400" stroke="#109810" stroke-width="1.200"/><text x="7" y="451.0" text-anchor="middle" font-family="Liberation Sans,DejaVu Sans,sans-serif" font-size="15" letter-spacing="0" fill="#10d010" stroke="#10d010" stroke-width="0.700">4</text>
</svg>
<div class="a" style="left:-1px;top:-4.500px;font-family:'Liberation Serif','DejaVu Serif',serif;font-weight:bold;font-size:21px;letter-spacing:-0.800px;line-height:24px;color:#000;-webkit-text-stroke:0.300px #000">Tek</div>
<div class="a" style="left:35px;top:-1px;font-size:14.500px;line-height:18px;letter-spacing:1.200px;-webkit-text-stroke:0.700px">Run</div>
<div class="a" style="left:925px;top:-1px;font-size:14.500px;line-height:18px;letter-spacing:1.300px;-webkit-text-stroke:0.550px">Trig?</div>
<div class="pn" style="left:20px;top:526px;width:555px;height:21px"></div>
<div class="pl py" style="left:26px;top:529px">1</div>
<div class="a y" style="left:68px;top:528px">50.0mV</div>
<div class="bw y" style="left:143.5px;top:531px;transform:scaleX(.8);transform-origin:0 0">B</div><div class="bw y" style="left:147.5px;top:535.500px;transform:scaleX(.62);transform-origin:0 0">W</div>
<div class="pl pc" style="left:165px;top:529px">2</div>
<div class="a c" style="left:207px;top:528px">50.0mV</div>
<div class="bw c" style="left:282.5px;top:531px;transform:scaleX(.8);transform-origin:0 0">B</div><div class="bw c" style="left:286.5px;top:535.500px;transform:scaleX(.62);transform-origin:0 0">W</div>
<div class="pl pm" style="left:304px;top:529px">3</div>
<div class="a m" style="left:346px;top:528px">50.0mV</div>
<div class="bw m" style="left:421.5px;top:531px;transform:scaleX(.8);transform-origin:0 0">B</div><div class="bw m" style="left:425.5px;top:535.500px;transform:scaleX(.62);transform-origin:0 0">W</div>
<div class="pl pg" style="left:443px;top:529px">4</div>
<div class="a g" style="left:485px;top:528px">50.0mV</div>
<div class="bw g" style="left:560.5px;top:531px;transform:scaleX(.8);transform-origin:0 0">B</div><div class="bw g" style="left:564.5px;top:535.500px;transform:scaleX(.62);transform-origin:0 0">W</div>
<div class="pn" style="left:20px;top:548px;width:555px;height:165px"></div>
<div class="a" style="left:158.0px;top:550.500px">Value</div>
<div class="a" style="left:246.0px;top:550.500px">Mean</div>
<div class="a" style="left:329.0px;top:550.500px">Min</div>
<div class="a" style="left:411.0px;top:550.500px">Max</div>
<div class="a" style="left:492.5px;top:550.500px">Std Dev</div>
<div class="pl py" style="left:26px;top:569px">1</div>
<div class="a y" style="left:55.500px;top:568.5px;letter-spacing:1.450px">Amplitude</div>
<div class="a y" style="left:158.0px;top:568.5px">194mV</div>
<div class="a y" style="left:246.0px;top:568.5px">194m</div>
<div class="a y" style="left:329.0px;top:568.5px">194m</div>
<div class="a y" style="left:411.0px;top:568.5px">194m</div>
<div class="a y" style="left:492.5px;top:568.5px">0.00</div>
<div class="pl pc" style="left:26px;top:587px">2</div>
<div class="a c" style="left:55.500px;top:586.5px;letter-spacing:1.450px">Amplitude</div>
<div class="a c" style="left:158.0px;top:586.5px">194mV</div>
<div class="a c" style="left:246.0px;top:586.5px">149m</div>
<div class="a c" style="left:329.0px;top:586.5px">12.0m</div>
<div class="a c" style="left:411.0px;top:586.5px">194m</div>
<div class="a c" style="left:492.5px;top:586.5px">91.0m</div>
<div class="pl pm" style="left:26px;top:605px">3</div>
<div class="a m" style="left:55.500px;top:604.5px;letter-spacing:1.450px">Amplitude</div>
<div class="a m" style="left:158.0px;top:604.5px">192mV</div>
<div class="a m" style="left:246.0px;top:604.5px">220m</div>
<div class="a m" style="left:329.0px;top:604.5px">192m</div>
<div class="a m" style="left:411.0px;top:604.5px">332m</div>
<div class="a m" style="left:492.5px;top:604.5px">62.4m</div>
<div class="pl pg" style="left:26px;top:623px">4</div>
<div class="a g" style="left:55.500px;top:622.5px;letter-spacing:1.450px">Amplitude</div>
<div class="a g" style="left:158.0px;top:622.5px">196mV</div>
<div class="a g" style="left:246.0px;top:622.5px">196m</div>
<div class="a g" style="left:329.0px;top:622.5px">196m</div>
<div class="a g" style="left:411.0px;top:622.5px">196m</div>
<div class="a g" style="left:492.5px;top:622.5px">0.00</div>
<div class="pl py" style="left:26px;top:641px">1</div>
<svg width="1024" height="768" viewBox="0 0 1024 768"><path class="y" fill="currentColor" d="M56 647.75h5v-2.750l4.300 3.500l-4.300 3.500v-2.750h-5z"/></svg>
<div class="pl pc" style="left:67px;top:641px">2</div>
<div class="a y" style="left:99.500px;top:640.5px;letter-spacing:0.600px">Phase</div>
<div class="a y" style="left:158.0px;top:640.5px">−89.16 °</div>
<div class="a y" style="left:246.0px;top:640.5px">−89.15</div>
<div class="a y" style="left:329.0px;top:640.5px">−89.16</div>
<div class="a y" style="left:411.0px;top:640.5px">−89.14</div>
<div class="a y" style="left:492.5px;top:640.5px">9.056m</div>
<div class="pl pc" style="left:26px;top:659px">2</div>
<svg width="1024" height="768" viewBox="0 0 1024 768"><path class="c" fill="currentColor" d="M56 665.75h5v-2.750l4.300 3.500l-4.300 3.500v-2.750h-5z"/></svg>
<div class="pl pm" style="left:67px;top:659px">3</div>
<div class="a c" style="left:99.500px;top:658.5px;letter-spacing:0.600px">Phase</div>
<div class="a c" style="left:158.0px;top:658.5px">−92.50 °</div>
<div class="a c" style="left:246.0px;top:658.5px">−97.90</div>
<div class="a c" style="left:329.0px;top:658.5px">−120.0</div>
<div class="a c" style="left:411.0px;top:658.5px">−92.32</div>
<div class="a c" style="left:492.5px;top:658.5px">12.35</div>
<div class="pl pm" style="left:26px;top:677px">3</div>
<svg width="1024" height="768" viewBox="0 0 1024 768"><path class="m" fill="currentColor" d="M56 683.75h5v-2.750l4.300 3.500l-4.300 3.500v-2.750h-5z"/></svg>
<div class="pl pg" style="left:67px;top:677px">4</div>
<div class="a m" style="left:99.500px;top:676.5px;letter-spacing:0.600px">Phase</div>
<div class="a m" style="left:158.0px;top:676.5px">−89.62 °</div>
<div class="a m" style="left:246.0px;top:676.5px">−89.73</div>
<div class="a m" style="left:329.0px;top:676.5px">−89.84</div>
<div class="a m" style="left:411.0px;top:676.5px">−89.62</div>
<div class="a m" style="left:492.5px;top:676.5px">158.0m</div>
<div class="pl pg" style="left:26px;top:695px">4</div>
<svg width="1024" height="768" viewBox="0 0 1024 768"><path class="g" fill="currentColor" d="M56 701.75h5v-2.750l4.300 3.500l-4.300 3.500v-2.750h-5z"/></svg>
<div class="pl py" style="left:67px;top:695px">1</div>
<div class="a g" style="left:99.500px;top:694.5px;letter-spacing:0.600px">Phase</div>
<div class="a g" style="left:158.0px;top:694.5px">−89.59 °</div>
<div class="a g" style="left:246.0px;top:694.5px">−89.06</div>
<div class="a g" style="left:329.0px;top:694.5px">−89.59</div>
<div class="a g" style="left:411.0px;top:694.5px">−88.52</div>
<div class="a g" style="left:492.5px;top:694.5px">759.2m</div>
<div class="pn" style="left:582px;top:670px;width:148px;height:38px"></div>
<div class="a" style="left:587.500px;top:672px;letter-spacing:1.450px">40.0µs</div>
<div class="a" style="left:623px;top:689px;color:#ffa000">8.00000ns</div>
<svg width="1024" height="768" viewBox="0 0 1024 768"><rect x="587" y="691" width="12" height="13" rx="1.500" fill="#ffa000"/><path d="M589 693.500h8M593 693.500v9" stroke="#000" stroke-width="1.800" fill="none"/><path d="M600 697.500h8M605 694.500l3 3l-3 3" stroke="#ffa000" stroke-width="1.300" fill="none"/><path d="M610 693h12l-6 6z" fill="#ffa000"/></svg>
<div class="pn" style="left:737px;top:670px;width:107px;height:38px"></div>
<div class="a" style="left:743px;top:672px">2.50GS/s</div>
<div class="a" style="left:743px;top:689px;letter-spacing:1.350px">1M points</div>
<div class="pn" style="left:851px;top:670px;width:171px;height:38px"></div>
<div class="pl py" style="left:882px;top:673px">1</div>
<svg width="1024" height="768" viewBox="0 0 1024 768"><path d="M920 676.500h5.500l2.500 8h4.500" stroke="#fff" stroke-width="2" fill="none"/></svg>
<div class="a" style="left:955px;top:672px">5.00mV</div>
<div class="pn" style="left:909px;top:729px;width:113px;height:37px"></div>
<div class="a" style="left:915px;top:732px">29 Oct  2020</div>
<div class="a" style="left:915px;top:748px">17:43:54</div>
<div class="bt" style="left:20px;height:60px;border-bottom-left-radius:0;border-bottom-right-radius:0"><span style="top:1px">Domain</span><span style="top:19px"><b style="font-weight:normal;margin-left:-3px;background:#c8d0f0;border-radius:3px;padding:0 4px 1px 5px">Time</b></span><span style="top:37px"><i style="font-style:normal;letter-spacing:1.350px">Frequency</i></span></div>
<div class="bt" style="left:138px;"><span style="top:10px">Add</span><span style="top:27px">Measurement</span></div>
<div class="bt" style="left:256px;"><span style="top:10px">Remove</span><span style="top:27px">Measurement</span></div>
<div class="bt" style="left:374px;"><span style="top:10px">Indicators</span><span style="top:27px"><b style="font-weight:normal;background:#c8d0f0;padding:0 0 0 1px">Off</b></span></div>
<div class="bt" style="left:492px;"><span style="top:10px">Waveform</span><span style="top:27px">Histograms</span></div>
<div class="bt" style="left:610px;"><span style="top:25px">More</span><svg style="left:0;top:0" width="114" height="53"><defs><linearGradient id="tg" x1="0" y1="0" x2="0" y2="1"><stop offset="0" stop-color="#fff"/><stop offset="0.700" stop-color="#f0f0f0"/><stop offset="1" stop-color="#909090"/></linearGradient></defs><path d="M45 23L56 12L67 23z" fill="url(#tg)"/></svg></div>
<div class="bt" style="left:728px;background:#8c8484;color:#585858;border-top-color:#b0a8a8;border-left-color:#989090;border-right-color:#404048;border-bottom-color:#404048"><span style="top:1px">Bring</span><span style="top:18px">Cursors</span><span style="top:34px">On Screen</span></div>
</body></html>
